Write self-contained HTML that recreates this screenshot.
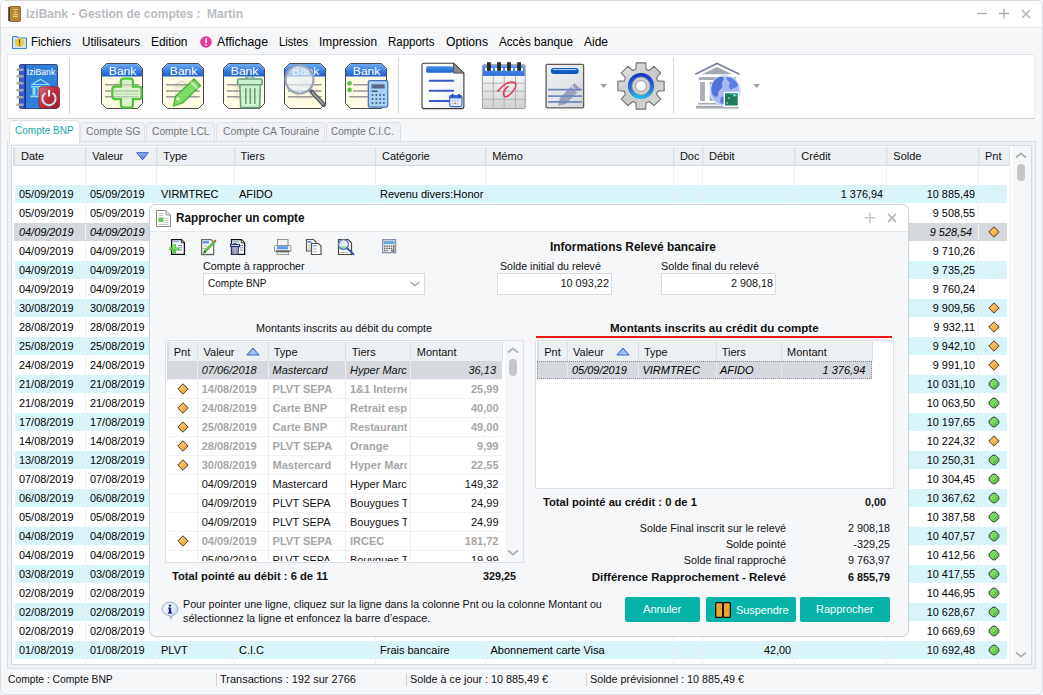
<!DOCTYPE html>
<html><head><meta charset="utf-8"><style>
html,body{margin:0;padding:0;width:1043px;height:695px;overflow:hidden;}
body{position:relative;font-family:"Liberation Sans", sans-serif;}
</style></head><body>
<div style="position:absolute;left:0px;top:0px;width:1043px;height:695px;background:#f5f7f9;"></div>
<div style="position:absolute;left:0px;top:0px;width:1043px;height:695px;border:1px solid #d9dde1;border-radius:6px;box-sizing:border-box;background:#f5f7f9;"></div>
<div style="position:absolute;left:1px;top:1px;width:1041px;height:26px;background:#fff;border-radius:5px 5px 0 0;border-bottom:1px solid #e6e9ec;"></div>
<svg style="position:absolute;left:8px;top:6px" width="13" height="16" viewBox="0 0 13 16">
<rect x="1" y="0.5" width="11.5" height="15" rx="1.5" fill="#b8862f" stroke="#7a5a22" stroke-width="0.8"/>
<rect x="0.3" y="1" width="1.6" height="14" fill="#3b3b3b"/>
<rect x="5" y="3" width="5" height="1" fill="#e8cf8a"/><path d="M5.2 7 L7.5 5 L9.8 7 Z" fill="#e8cf8a"/><rect x="5" y="8" width="5" height="1.2" fill="#e8cf8a"/><rect x="5" y="10" width="5" height="1" fill="#e8cf8a"/>
</svg>
<span id="t1" style="position:absolute;top:4.00px;line-height:20px;font-size:12px;color:#b9bcc0;font-weight:bold;white-space:pre;left:26px;transform-origin:0 50%;transform:scaleX(0.9983);">IziBank - Gestion de comptes :  Martin</span>
<svg style="position:absolute;left:970px;top:5px" width="70" height="20" viewBox="0 0 70 20">
<path d="M7 8.5 H17" stroke="#a9aeb2" stroke-width="1.3"/>
<path d="M29 8.5 H39 M34 3.5 V13.5" stroke="#a9aeb2" stroke-width="1.3"/>
<path d="M52 5 L60 13 M60 5 L52 13" stroke="#a9aeb2" stroke-width="1.3"/>
</svg>
<svg style="position:absolute;left:12px;top:35px" width="15" height="14" viewBox="0 0 15 14">
<path d="M0.5 1.5 H5 L6 3 H14.5 V13.5 H0.5 Z" fill="#cfe3f7" stroke="#3d7fcf" stroke-width="1"/>
<circle cx="7.5" cy="7.5" r="4.6" fill="#f5c842"/>
<rect x="6.9" y="4.3" width="1.3" height="4.2" fill="#5a4500"/><rect x="6.9" y="9.3" width="1.3" height="1.3" fill="#5a4500"/>
</svg>
<svg style="position:absolute;left:200px;top:36px" width="12" height="12" viewBox="0 0 12 12">
<circle cx="6" cy="6" r="5.8" fill="#e8359a"/><rect x="5.2" y="2.3" width="1.6" height="4.8" fill="#fff"/><rect x="5.2" y="8.1" width="1.6" height="1.6" fill="#fff"/>
</svg>
<span id="t2" style="position:absolute;top:32.00px;line-height:20px;font-size:12.5px;color:#000;font-weight:normal;white-space:pre;left:31px;transform-origin:0 50%;transform:scaleX(0.9140);">Fichiers</span>
<span id="t3" style="position:absolute;top:32.00px;line-height:20px;font-size:12.5px;color:#000;font-weight:normal;white-space:pre;left:82px;transform-origin:0 50%;transform:scaleX(0.9381);">Utilisateurs</span>
<span id="t4" style="position:absolute;top:32.00px;line-height:20px;font-size:12.5px;color:#000;font-weight:normal;white-space:pre;left:151px;transform-origin:0 50%;transform:scaleX(0.9546);">Edition</span>
<span id="t5" style="position:absolute;top:32.00px;line-height:20px;font-size:12.5px;color:#000;font-weight:normal;white-space:pre;left:217px;transform-origin:0 50%;transform:scaleX(0.9825);">Affichage</span>
<span id="t6" style="position:absolute;top:32.00px;line-height:20px;font-size:12.5px;color:#000;font-weight:normal;white-space:pre;left:279px;transform-origin:0 50%;transform:scaleX(0.8880);">Listes</span>
<span id="t7" style="position:absolute;top:32.00px;line-height:20px;font-size:12.5px;color:#000;font-weight:normal;white-space:pre;left:319px;transform-origin:0 50%;transform:scaleX(0.9486);">Impression</span>
<span id="t8" style="position:absolute;top:32.00px;line-height:20px;font-size:12.5px;color:#000;font-weight:normal;white-space:pre;left:388px;transform-origin:0 50%;transform:scaleX(0.9165);">Rapports</span>
<span id="t9" style="position:absolute;top:32.00px;line-height:20px;font-size:12.5px;color:#000;font-weight:normal;white-space:pre;left:446px;transform-origin:0 50%;transform:scaleX(0.9746);">Options</span>
<span id="t10" style="position:absolute;top:32.00px;line-height:20px;font-size:12.5px;color:#000;font-weight:normal;white-space:pre;left:499px;transform-origin:0 50%;transform:scaleX(0.9339);">Accès banque</span>
<span id="t11" style="position:absolute;top:32.00px;line-height:20px;font-size:12.5px;color:#000;font-weight:normal;white-space:pre;left:584px;transform-origin:0 50%;transform:scaleX(0.9588);">Aide</span>
<div style="position:absolute;left:7px;top:54px;width:1028px;height:65px;background:#fff;border:1px solid #e1e5e9;border-bottom-color:#cdd2d7;border-right-color:#eceff2;box-sizing:border-box;"></div>
<div style="position:absolute;left:69px;top:58px;width:1px;height:56px;background:#d4d8dc;"></div>
<div style="position:absolute;left:398px;top:58px;width:1px;height:56px;background:#d4d8dc;"></div>
<div style="position:absolute;left:673px;top:58px;width:1px;height:56px;background:#d4d8dc;"></div>
<svg style="position:absolute;left:12px;top:58px" width="50" height="54" viewBox="0 0 50 54">
<defs><linearGradient id="pwr" x1="0" y1="0" x2="1" y2="1"><stop offset="0" stop-color="#d07080"/><stop offset="0.5" stop-color="#c02a3a"/><stop offset="1" stop-color="#a01e2a"/></linearGradient></defs>
<rect x="7.5" y="6.5" width="38" height="44" rx="1.5" fill="#2f80da" stroke="#3a4a7a" stroke-width="1"/>
<rect x="8" y="7" width="6" height="43" fill="#3a5ad0"/><rect x="12.5" y="7" width="1.5" height="43" fill="#1e2a80"/>
<g fill="#a8aaa8"><rect x="4.5" y="10.5" width="7" height="2.5"/><rect x="4.5" y="17" width="7" height="2.5"/><rect x="4.5" y="24" width="7" height="2.5"/><rect x="4.5" y="31" width="7" height="2.5"/><rect x="4.5" y="38" width="7" height="2.5"/><rect x="4.5" y="45.5" width="7" height="2.5"/></g>
<text x="14.8" y="16.7" font-family="Liberation Sans" font-size="9.6" fill="#fff" stroke="#2f80da" stroke-width="0.6" paint-order="stroke" textLength="28.5" lengthAdjust="spacingAndGlyphs">IziBank</text>
<path d="M18.5 27 L28.5 20.5 L38.5 27 Z" fill="#8ee0ee"/><path d="M22 26 L28.5 22 L35 26 Z" fill="#2f80da"/>
<rect x="19" y="28" width="19" height="1.6" fill="#8ee0ee"/>
<g fill="#8ee0ee"><rect x="20.5" y="30" width="3" height="7"/><rect x="25.5" y="30" width="3" height="7"/></g>
<rect x="18.5" y="37.5" width="12" height="1.8" fill="#8ee0ee"/>
<rect x="27" y="28.8" width="20.5" height="21.3" rx="3" fill="url(#pwr)" stroke="#8a2030" stroke-width="0.8"/>
<path d="M33.5 35 A6.6 6.6 0 1 0 40.5 35" fill="none" stroke="#c8e4f4" stroke-width="2"/><rect x="36" y="32" width="2" height="6.5" fill="#e8f4fa"/>
</svg>
<svg style="position:absolute;left:101px;top:63px" width="44" height="47" viewBox="0 0 44 47"><defs><linearGradient id="bh101" x1="0" y1="0" x2="0" y2="1"><stop offset="0" stop-color="#6aaaf2"/><stop offset="0.55" stop-color="#3a7ee0"/><stop offset="1" stop-color="#1e5cc6"/></linearGradient></defs>
<path d="M5.5 0.5 H36.5 L41.5 5.5 V40.5 L36.5 45.5 H5.5 L0.5 40.5 V5.5 Z" fill="#fdfbe2" stroke="#4a4a4a" stroke-width="1"/>
<path d="M5.7 1 H36.3 L41 5.7 V13.6 H1 V5.7 Z" fill="url(#bh101)"/>
<text x="21.6" y="11.8" text-anchor="middle" font-family="Liberation Sans" font-size="11.8" fill="#fff" stroke="#3a7ee0" stroke-width="0.7" paint-order="stroke" textLength="27.5" lengthAdjust="spacingAndGlyphs">Bank</text>
<path d="M12 23 L20 18 L28 23 Z M13 24 H27 M14 25 V33 M26 25 V33 M12 35 H28" fill="none" stroke="#e8dcc0" stroke-width="1.5" opacity="0.8"/><g stroke="#9a9898" stroke-width="1.6"><path d="M4 21.8 H37.7 M4 28 H37.7 M4 33.8 H37.7"/></g><path d="M22.9 15.6 H28.9 Q31.9 15.6 31.9 18.6 V23.7 H37.5 Q40.5 23.7 40.5 26.7 V33.2 Q40.5 36.2 37.5 36.2 H31.9 V41.7 Q31.9 44.7 28.9 44.7 H22.9 Q19.9 44.7 19.9 41.7 V36.2 H14.3 Q11.3 36.2 11.3 33.2 V26.7 Q11.3 23.7 14.3 23.7 H19.9 V18.6 Q19.9 15.6 22.9 15.6 Z" fill="#c8ecc0" fill-opacity="0.6" stroke="#4ec43c" stroke-width="2.2"/><path d="M15 28 H37 M15 31 H37" stroke="#a8dca0" stroke-width="1"/></svg>
<svg style="position:absolute;left:162px;top:63px" width="44" height="47" viewBox="0 0 44 47"><defs><linearGradient id="bh162" x1="0" y1="0" x2="0" y2="1"><stop offset="0" stop-color="#6aaaf2"/><stop offset="0.55" stop-color="#3a7ee0"/><stop offset="1" stop-color="#1e5cc6"/></linearGradient></defs>
<path d="M5.5 0.5 H36.5 L41.5 5.5 V40.5 L36.5 45.5 H5.5 L0.5 40.5 V5.5 Z" fill="#fdfbe2" stroke="#4a4a4a" stroke-width="1"/>
<path d="M5.7 1 H36.3 L41 5.7 V13.6 H1 V5.7 Z" fill="url(#bh162)"/>
<text x="21.6" y="11.8" text-anchor="middle" font-family="Liberation Sans" font-size="11.8" fill="#fff" stroke="#3a7ee0" stroke-width="0.7" paint-order="stroke" textLength="27.5" lengthAdjust="spacingAndGlyphs">Bank</text>
<path d="M12 23 L20 18 L28 23 Z M13 24 H27 M14 25 V33 M26 25 V33 M12 35 H28" fill="none" stroke="#e8dcc0" stroke-width="1.5" opacity="0.8"/><g stroke="#9a9898" stroke-width="1.6"><path d="M4 21.8 H37.7 M4 28 H37.7 M4 33.8 H37.7"/></g><path d="M11.5 43 L13.5 33.5 L32 16 L38.5 22.5 L20.5 40 Z" fill="#80da6a" stroke="#44b030" stroke-width="1.3" stroke-linejoin="round"/><path d="M29 19 L35.5 25.5" stroke="#c8f0b8" stroke-width="1.8"/><path d="M13.5 36 L16.5 34 L18 38 Z" fill="#d8f4c8"/></svg>
<svg style="position:absolute;left:223px;top:63px" width="44" height="47" viewBox="0 0 44 47"><defs><linearGradient id="bh223" x1="0" y1="0" x2="0" y2="1"><stop offset="0" stop-color="#6aaaf2"/><stop offset="0.55" stop-color="#3a7ee0"/><stop offset="1" stop-color="#1e5cc6"/></linearGradient></defs>
<path d="M5.5 0.5 H36.5 L41.5 5.5 V40.5 L36.5 45.5 H5.5 L0.5 40.5 V5.5 Z" fill="#fdfbe2" stroke="#4a4a4a" stroke-width="1"/>
<path d="M5.7 1 H36.3 L41 5.7 V13.6 H1 V5.7 Z" fill="url(#bh223)"/>
<text x="21.6" y="11.8" text-anchor="middle" font-family="Liberation Sans" font-size="11.8" fill="#fff" stroke="#3a7ee0" stroke-width="0.7" paint-order="stroke" textLength="27.5" lengthAdjust="spacingAndGlyphs">Bank</text>
<path d="M12 23 L20 18 L28 23 Z M13 24 H27 M14 25 V33 M26 25 V33 M12 35 H28" fill="none" stroke="#e8dcc0" stroke-width="1.5" opacity="0.8"/><g stroke="#9a9898" stroke-width="1.6"><path d="M4 21.8 H37.7 M4 28 H37.7 M4 33.8 H37.7"/></g><path d="M22 15.5 Q27 11.5 32 15.5" fill="none" stroke="#7aa8c0" stroke-width="1.6"/><rect x="14.6" y="16" width="24.5" height="5.8" rx="1.5" fill="#c8f0cc" stroke="#6e9e76" stroke-width="1.6"/><path d="M16.8 21.8 H37.4 L36.6 43.6 Q36.5 44.6 35.5 44.6 H18.8 Q17.8 44.6 17.7 43.6 Z" fill="#c8f4cc" fill-opacity="0.9" stroke="#6e9e76" stroke-width="1.6"/><path d="M22.8 25 V41 M27.3 25 V41 M31.8 25 V41" stroke="#6e9e76" stroke-width="1.6"/></svg>
<svg style="position:absolute;left:284px;top:63px" width="44" height="47" viewBox="0 0 44 47"><defs><linearGradient id="bh284" x1="0" y1="0" x2="0" y2="1"><stop offset="0" stop-color="#6aaaf2"/><stop offset="0.55" stop-color="#3a7ee0"/><stop offset="1" stop-color="#1e5cc6"/></linearGradient></defs>
<path d="M5.5 0.5 H36.5 L41.5 5.5 V40.5 L36.5 45.5 H5.5 L0.5 40.5 V5.5 Z" fill="#fdfbe2" stroke="#4a4a4a" stroke-width="1"/>
<path d="M5.7 1 H36.3 L41 5.7 V13.6 H1 V5.7 Z" fill="url(#bh284)"/>
<text x="21.6" y="11.8" text-anchor="middle" font-family="Liberation Sans" font-size="11.8" fill="#fff" stroke="#3a7ee0" stroke-width="0.7" paint-order="stroke" textLength="27.5" lengthAdjust="spacingAndGlyphs">Bank</text>
<path d="M12 23 L20 18 L28 23 Z M13 24 H27 M14 25 V33 M26 25 V33 M12 35 H28" fill="none" stroke="#e8dcc0" stroke-width="1.5" opacity="0.8"/><g stroke="#9a9898" stroke-width="1.6"><path d="M4 21.8 H37.7 M4 28 H37.7 M4 33.8 H37.7"/></g><circle cx="15.5" cy="16.5" r="14" fill="#e8f0f8" fill-opacity="0.7" stroke="#9aa4b8" stroke-width="2.2"/><path d="M27.5 28.5 L40 42" stroke="#5c6066" stroke-width="4.2" stroke-linecap="round"/><path d="M28 29 L39.5 41.5" stroke="#a8acb0" stroke-width="1.2"/></svg>
<svg style="position:absolute;left:345px;top:63px" width="44" height="47" viewBox="0 0 44 47"><defs><linearGradient id="bh345" x1="0" y1="0" x2="0" y2="1"><stop offset="0" stop-color="#6aaaf2"/><stop offset="0.55" stop-color="#3a7ee0"/><stop offset="1" stop-color="#1e5cc6"/></linearGradient></defs>
<path d="M5.5 0.5 H36.5 L41.5 5.5 V40.5 L36.5 45.5 H5.5 L0.5 40.5 V5.5 Z" fill="#fdfbe2" stroke="#4a4a4a" stroke-width="1"/>
<path d="M5.7 1 H36.3 L41 5.7 V13.6 H1 V5.7 Z" fill="url(#bh345)"/>
<text x="21.6" y="11.8" text-anchor="middle" font-family="Liberation Sans" font-size="11.8" fill="#fff" stroke="#3a7ee0" stroke-width="0.7" paint-order="stroke" textLength="27.5" lengthAdjust="spacingAndGlyphs">Bank</text>
<circle cx="4.6" cy="20.4" r="2.4" fill="#5cc84a"/><circle cx="4.6" cy="26.9" r="2.4" fill="#5cc84a"/><rect x="23.3" y="17.7" width="19.5" height="26.5" rx="1.5" fill="#a8d4f4" stroke="#4a68b8" stroke-width="1.2"/><rect x="26.5" y="21.3" width="13.2" height="4.2" fill="#5a6888"/><g fill="#4a5a80"><circle cx="27.5" cy="32" r="1"/><circle cx="31.3" cy="32" r="1"/><circle cx="35.1" cy="32" r="1"/><circle cx="38.9" cy="32" r="1"/><circle cx="27.5" cy="36" r="1"/><circle cx="31.3" cy="36" r="1"/><circle cx="35.1" cy="36" r="1"/><circle cx="38.9" cy="36" r="1"/><circle cx="27.5" cy="40" r="1"/><circle cx="31.3" cy="40" r="1"/><circle cx="35.1" cy="40" r="1"/><circle cx="38.9" cy="40" r="1"/></g><rect x="26.5" y="27.5" width="6" height="1.5" fill="#4a5a80"/></svg>
<svg style="position:absolute;left:345px;top:63px" width="44" height="47"><g stroke="#9a9898" stroke-width="1.6"><path d="M8 21.8 H23 M8 28 H23 M4 33.8 H23"/></g></svg>
<svg style="position:absolute;left:416px;top:57px" width="54" height="56" viewBox="0 0 54 56">
<defs><linearGradient id="dpg" x1="0" y1="0" x2="1" y2="1"><stop offset="0.45" stop-color="#fff"/><stop offset="1" stop-color="#dfe2e6"/></linearGradient>
<linearGradient id="dbar" x1="0" y1="0" x2="0" y2="1"><stop offset="0" stop-color="#4a90ea"/><stop offset="1" stop-color="#1e64cc"/></linearGradient></defs>
<path d="M8 6.2 H37.5 L47.9 16.1 V49.6 Q47.9 51.6 45.9 51.6 H8 Q6 51.6 6 49.6 V8.2 Q6 6.2 8 6.2 Z" fill="url(#dpg)" stroke="#3a3a3a" stroke-width="1.1"/>
<path d="M37.5 6.2 V16.1 H47.9 Z" fill="#8a8c90" stroke="#3a3a3a" stroke-width="0.8"/>
<rect x="10.1" y="9.3" width="27" height="6.4" rx="1.5" fill="url(#dbar)"/>
<g stroke="#3c58c8" stroke-width="2"><path d="M12.9 23.8 H37.9 M12.9 33.8 H37.9 M12.9 43.9 H34"/></g>
<rect x="33.6" y="38.6" width="12.3" height="11" rx="1.5" fill="#e0ecfa" stroke="#3a68d0" stroke-width="1.1"/>
<rect x="33.6" y="38.6" width="12.3" height="2.8" fill="#3a68d0"/>
<g fill="#1a3aa0"><rect x="35.8" y="37" width="1.6" height="3"/><rect x="42.2" y="37" width="1.6" height="3"/></g>
<g fill="#9ab4e0"><rect x="36" y="43" width="1.2" height="1.2"/><rect x="38.5" y="43" width="1.2" height="1.2"/><rect x="41" y="43" width="1.2" height="1.2"/><rect x="36" y="46" width="1.2" height="1.2"/><rect x="41" y="46" width="1.2" height="1.2"/></g><rect x="38.5" y="45.5" width="1.6" height="1.6" fill="#e07020"/>
</svg>
<svg style="position:absolute;left:476px;top:57px" width="54" height="56" viewBox="0 0 54 56">
<defs><linearGradient id="cgr" x1="0" y1="0" x2="0" y2="1"><stop offset="0" stop-color="#ffffff"/><stop offset="1" stop-color="#d0d2d4"/></linearGradient>
<linearGradient id="chd" x1="0" y1="0" x2="0" y2="1"><stop offset="0" stop-color="#5a9af0"/><stop offset="1" stop-color="#2a6ed8"/></linearGradient></defs>
<rect x="6.4" y="7.7" width="42.8" height="43.9" rx="1.5" fill="url(#cgr)" stroke="#9a9a9a" stroke-width="1"/>
<rect x="6.9" y="8.2" width="41.8" height="10.7" fill="url(#chd)"/>
<g fill="#fff"><rect x="9" y="11" width="3" height="2.8"/><rect x="19" y="11" width="3" height="2.8"/><rect x="29" y="11" width="3" height="2.8"/><rect x="39" y="11" width="3" height="2.8"/><rect x="14.5" y="11" width="2.5" height="2.8"/><rect x="24.5" y="11" width="2.5" height="2.8"/><rect x="34.5" y="11" width="2.5" height="2.8"/><rect x="44.5" y="11" width="2.5" height="2.8"/></g>
<g fill="#2a2a22"><rect x="11" y="5.2" width="3.8" height="8.5"/><rect x="21.1" y="5.2" width="3.8" height="8.5"/><rect x="31.1" y="5.2" width="3.8" height="8.5"/><rect x="41.2" y="5.2" width="3.8" height="8.5"/></g>
<g stroke="#b4b4b4" stroke-width="1"><path d="M6.5 26.2 H49 M6.5 34.2 H49 M6.5 42.3 H49 M17.3 19 V51.5 M28.2 19 V51.5 M39.5 19 V51.5"/></g>
<path d="M21.5 34.5 C27 27 34 24 38.5 25.5 C42 27.5 38 35 32 39 C27.5 41.5 26.5 37 29 32.5 C30 31 31.5 29.5 32.5 29.5" fill="none" stroke="#e23a5a" stroke-width="1.6"/>
</svg>
<svg style="position:absolute;left:538px;top:57px" width="74" height="56" viewBox="0 0 74 56">
<defs><linearGradient id="npg" x1="0" y1="0" x2="1" y2="1"><stop offset="0" stop-color="#eef1f4"/><stop offset="0.6" stop-color="#e2e4e6"/><stop offset="1" stop-color="#cfd2d6"/></linearGradient></defs>
<rect x="8.1" y="7.3" width="37.5" height="43.5" rx="1" fill="url(#npg)" stroke="#5a5a5a" stroke-width="1.3"/>
<rect x="12.9" y="10.9" width="27.8" height="6" rx="3" fill="#0a5cc0"/><path d="M15 12.6 H38.5" stroke="#cfe4fa" stroke-width="0.9"/>
<path d="M20.2 48.4 L22 41 L36.5 26 L42.5 32 L28 47 Z" fill="#9aa0bc"/><path d="M33.5 29 L39.5 35" stroke="#e8eaf0" stroke-width="1.1"/>
<g stroke="#6f88c0" stroke-width="1.8"><path d="M10.1 32.7 H44 M10.1 39.1 H44 M10.1 44.8 H44"/></g>
<path d="M62.1 27 H69 L65.55 31 Z" fill="#9aa0a4"/>
</svg>
<svg style="position:absolute;left:612px;top:57px" width="56" height="56" viewBox="0 0 56 56">
<defs><linearGradient id="gg" x1="0" y1="0" x2="1" y2="1"><stop offset="0" stop-color="#e4e4e4"/><stop offset="0.5" stop-color="#c8caca"/><stop offset="1" stop-color="#d8d8d8"/></linearGradient>
<linearGradient id="gb" x1="0" y1="0" x2="0" y2="1"><stop offset="0" stop-color="#1030c0"/><stop offset="0.6" stop-color="#2a70d8"/><stop offset="1" stop-color="#20c4e4"/></linearGradient></defs>
<path d="M23.83 12.28 L24.31 5.87 L33.69 5.87 L34.17 12.28 L37.16 13.52 L42.04 9.33 L48.67 15.96 L44.48 20.84 L45.72 23.83 L52.13 24.31 L52.13 33.69 L45.72 34.17 L44.48 37.16 L48.67 42.04 L42.04 48.67 L37.16 44.48 L34.17 45.72 L33.69 52.13 L24.31 52.13 L23.83 45.72 L20.84 44.48 L15.96 48.67 L9.33 42.04 L13.52 37.16 L12.28 34.17 L5.87 33.69 L5.87 24.31 L12.28 23.83 L13.52 20.84 L9.33 15.96 L15.96 9.33 L20.84 13.52 Z" fill="url(#gg)" stroke="#707070" stroke-width="1.1" stroke-linejoin="round"/>
<circle cx="29" cy="29" r="13.1" fill="url(#gb)"/>
<circle cx="29" cy="29" r="9" fill="#cfd0d0" stroke="#9a9c9c" stroke-width="0.8"/>
<circle cx="29" cy="29" r="5.4" fill="#fff" stroke="#8a8a8a" stroke-width="0.8"/>
</svg>
<svg style="position:absolute;left:688px;top:57px" width="80" height="56" viewBox="0 0 80 56">
<path d="M7.3 17.3 L29 6.4 L51.6 17.3" fill="none" stroke="#7a80a0" stroke-width="1.8"/>
<path d="M14 17.3 L29 10 L44 17.3 Z" fill="#a4a8b0"/>
<rect x="10.9" y="20.1" width="37" height="2.9" fill="#a6abb4"/>
<g fill="#a8adb6"><rect x="12.1" y="25" width="4.8" height="19"/><rect x="21.8" y="25" width="4.8" height="19"/></g>
<rect x="10" y="45.9" width="26" height="1.6" fill="#a6abb4"/>
<rect x="8" y="48.8" width="42.8" height="2.8" fill="#a6abb4"/>
<circle cx="37.1" cy="33.8" r="15.7" fill="#d4def6" opacity="0.9"/>
<circle cx="37.1" cy="33.8" r="14.2" fill="#9cb4ee" opacity="0.85"/>
<path d="M24 28 C26 22 31 19 35 20 C37 23 33 25 34 28 C36 31 31 32 30 36 C31 40 27 41 25 38 C23 35 23 31 24 28 Z" fill="#4e74da"/>
<path d="M39 20 C44 20 48 23 50 28 C49 31 46 30 44 32 C41 33 40 29 42 26 C40 24 38 22 39 20 Z" fill="#5a7ede"/>
<path d="M33 40 C36 38 38 42 36 46 C34 48 31 46 33 40 Z" fill="#5a7ede"/>
<rect x="36.3" y="35.5" width="14.1" height="13.7" fill="#1f7a5c" stroke="#fff" stroke-width="1.4"/>
<path d="M37 36.2 H49.7 V39 L43 37.8 Z" fill="#3aaea2"/>
<g fill="#d8f0ea"><circle cx="46.5" cy="38.5" r="0.9"/><circle cx="41" cy="41" r="0.8"/><circle cx="39" cy="46" r="0.8"/></g>
<path d="M65.3 27 H72.1 L68.7 31 Z" fill="#9aa0a4"/>
</svg>
<div style="position:absolute;left:80px;top:122px;width:65px;height:20px;background:#eff1f4;border:1px solid #dde1e6;border-bottom:none;border-radius:4px 4px 0 0;box-sizing:border-box;"></div>
<span id="t12" style="position:absolute;top:120.80px;line-height:20px;font-size:11.5px;color:#74787c;font-weight:normal;white-space:pre;left:86px;transform-origin:0 50%;transform:scaleX(0.9055);">Compte SG</span>
<div style="position:absolute;left:146px;top:122px;width:69px;height:20px;background:#eff1f4;border:1px solid #dde1e6;border-bottom:none;border-radius:4px 4px 0 0;box-sizing:border-box;"></div>
<span id="t13" style="position:absolute;top:120.80px;line-height:20px;font-size:11.5px;color:#74787c;font-weight:normal;white-space:pre;left:152.3px;transform-origin:0 50%;transform:scaleX(0.8906);">Compte LCL</span>
<div style="position:absolute;left:216px;top:122px;width:109px;height:20px;background:#eff1f4;border:1px solid #dde1e6;border-bottom:none;border-radius:4px 4px 0 0;box-sizing:border-box;"></div>
<span id="t14" style="position:absolute;top:120.80px;line-height:20px;font-size:11.5px;color:#74787c;font-weight:normal;white-space:pre;left:222.6px;transform-origin:0 50%;transform:scaleX(0.9084);">Compte CA Touraine</span>
<div style="position:absolute;left:326px;top:122px;width:75px;height:20px;background:#eff1f4;border:1px solid #dde1e6;border-bottom:none;border-radius:4px 4px 0 0;box-sizing:border-box;"></div>
<span id="t15" style="position:absolute;top:120.80px;line-height:20px;font-size:11.5px;color:#74787c;font-weight:normal;white-space:pre;left:331.4px;transform-origin:0 50%;transform:scaleX(0.8606);">Compte C.I.C.</span>
<div style="position:absolute;left:7px;top:141px;width:1029px;height:528px;background:#eff2f5;border:1px solid #dce0e5;box-sizing:border-box;"></div>
<div style="position:absolute;left:9px;top:120px;width:71px;height:24px;background:#fff;border:1px solid #dde1e6;border-bottom:none;border-radius:5px 5px 0 0;box-sizing:border-box;"></div>
<span id="t16" style="position:absolute;top:119.70px;line-height:20px;font-size:11.5px;color:#14aaa8;font-weight:normal;white-space:pre;left:15.3px;transform-origin:0 50%;transform:scaleX(0.8747);">Compte BNP</span>
<div style="position:absolute;left:11px;top:145px;width:1021px;height:520px;background:#fff;border:1px solid #d6dbe0;box-sizing:border-box;"></div>
<div style="position:absolute;left:13px;top:147px;width:997px;height:19px;background:#edf0f3;border-bottom:1px solid #d9dee3;border-right:1px solid #d9dee3;box-sizing:border-box;"></div>
<div style="position:absolute;left:13px;top:147px;width:2px;height:19px;background:#d9dee3;"></div>
<div style="position:absolute;left:85px;top:147px;width:1px;height:18px;background:#d9dee3;"></div>
<div style="position:absolute;left:86px;top:147px;width:1px;height:18px;background:#e6e9ed;"></div>
<div style="position:absolute;left:156px;top:147px;width:1px;height:18px;background:#d9dee3;"></div>
<div style="position:absolute;left:157px;top:147px;width:1px;height:18px;background:#e6e9ed;"></div>
<div style="position:absolute;left:234px;top:147px;width:1px;height:18px;background:#d9dee3;"></div>
<div style="position:absolute;left:235px;top:147px;width:1px;height:18px;background:#e6e9ed;"></div>
<div style="position:absolute;left:375px;top:147px;width:1px;height:18px;background:#d9dee3;"></div>
<div style="position:absolute;left:376px;top:147px;width:1px;height:18px;background:#e6e9ed;"></div>
<div style="position:absolute;left:485px;top:147px;width:1px;height:18px;background:#d9dee3;"></div>
<div style="position:absolute;left:486px;top:147px;width:1px;height:18px;background:#e6e9ed;"></div>
<div style="position:absolute;left:673px;top:147px;width:1px;height:18px;background:#d9dee3;"></div>
<div style="position:absolute;left:674px;top:147px;width:1px;height:18px;background:#e6e9ed;"></div>
<div style="position:absolute;left:702px;top:147px;width:1px;height:18px;background:#d9dee3;"></div>
<div style="position:absolute;left:703px;top:147px;width:1px;height:18px;background:#e6e9ed;"></div>
<div style="position:absolute;left:794px;top:147px;width:1px;height:18px;background:#d9dee3;"></div>
<div style="position:absolute;left:795px;top:147px;width:1px;height:18px;background:#e6e9ed;"></div>
<div style="position:absolute;left:886px;top:147px;width:1px;height:18px;background:#d9dee3;"></div>
<div style="position:absolute;left:887px;top:147px;width:1px;height:18px;background:#e6e9ed;"></div>
<div style="position:absolute;left:978px;top:147px;width:1px;height:18px;background:#d9dee3;"></div>
<div style="position:absolute;left:979px;top:147px;width:1px;height:18px;background:#e6e9ed;"></div>
<span id="t17" style="position:absolute;top:146.30px;line-height:20px;font-size:11px;color:#111;font-weight:normal;white-space:pre;left:21px;transform-origin:0 50%;">Date</span>
<span id="t18" style="position:absolute;top:146.30px;line-height:20px;font-size:11px;color:#111;font-weight:normal;white-space:pre;left:92.3px;transform-origin:0 50%;">Valeur</span>
<span id="t19" style="position:absolute;top:146.30px;line-height:20px;font-size:11px;color:#111;font-weight:normal;white-space:pre;left:163.3px;transform-origin:0 50%;">Type</span>
<span id="t20" style="position:absolute;top:146.30px;line-height:20px;font-size:11px;color:#111;font-weight:normal;white-space:pre;left:240.6px;transform-origin:0 50%;">Tiers</span>
<span id="t21" style="position:absolute;top:146.30px;line-height:20px;font-size:11px;color:#111;font-weight:normal;white-space:pre;left:382px;transform-origin:0 50%;">Catégorie</span>
<span id="t22" style="position:absolute;top:146.30px;line-height:20px;font-size:11px;color:#111;font-weight:normal;white-space:pre;left:492.2px;transform-origin:0 50%;">Mémo</span>
<span id="t23" style="position:absolute;top:146.30px;line-height:20px;font-size:11px;color:#111;font-weight:normal;white-space:pre;left:679.9px;transform-origin:0 50%;">Doc</span>
<span id="t24" style="position:absolute;top:146.30px;line-height:20px;font-size:11px;color:#111;font-weight:normal;white-space:pre;left:709px;transform-origin:0 50%;">Débit</span>
<span id="t25" style="position:absolute;top:146.30px;line-height:20px;font-size:11px;color:#111;font-weight:normal;white-space:pre;left:801.3px;transform-origin:0 50%;">Crédit</span>
<span id="t26" style="position:absolute;top:146.30px;line-height:20px;font-size:11px;color:#111;font-weight:normal;white-space:pre;left:893.3px;transform-origin:0 50%;">Solde</span>
<span id="t27" style="position:absolute;top:146.30px;line-height:20px;font-size:11px;color:#111;font-weight:normal;white-space:pre;left:985px;transform-origin:0 50%;">Pnt</span>
<svg style="position:absolute;left:135.5px;top:151.5px" width="13" height="9"><defs><linearGradient id="tdn" x1="0" y1="0" x2="0" y2="1"><stop offset="0" stop-color="#9ab8f4"/><stop offset="1" stop-color="#4a74d8"/></linearGradient></defs><path d="M0.7 0.7 H12.3 L6.5 7.8 Z" fill="url(#tdn)" stroke="#3a5cc0" stroke-width="1"/></svg>
<div style="position:absolute;left:15px;top:185px;width:992px;height:18px;background:#d8f6f9;"></div>
<span id="t28" style="position:absolute;top:184.00px;line-height:20px;font-size:11px;color:#000;font-weight:normal;white-space:pre;left:19.2px;transform-origin:0 50%;transform:scaleX(0.99);">05/09/2019</span>
<span id="t29" style="position:absolute;top:184.00px;line-height:20px;font-size:11px;color:#000;font-weight:normal;white-space:pre;left:89.9px;transform-origin:0 50%;transform:scaleX(0.99);">05/09/2019</span>
<span id="t30" style="position:absolute;top:184.00px;line-height:20px;font-size:11px;color:#000;font-weight:normal;white-space:pre;left:161px;transform-origin:0 50%;">VIRMTREC</span>
<span id="t31" style="position:absolute;top:184.00px;line-height:20px;font-size:11px;color:#000;font-weight:normal;white-space:pre;left:239px;transform-origin:0 50%;">AFIDO</span>
<span id="t32" style="position:absolute;top:184.00px;line-height:20px;font-size:11px;color:#000;font-weight:normal;white-space:pre;left:380px;transform-origin:0 50%;">Revenu divers:Honor</span>
<span id="t33" style="position:absolute;top:184.00px;line-height:20px;font-size:11px;color:#000;font-weight:normal;white-space:pre;left:482.6px;width:400px;text-align:right;transform-origin:100% 50%;transform:scaleX(0.985);">1 376,94</span>
<span id="t34" style="position:absolute;top:184.00px;line-height:20px;font-size:11px;color:#000;font-weight:normal;white-space:pre;left:574.7px;width:400px;text-align:right;transform-origin:100% 50%;transform:scaleX(0.985);">10 885,49</span>
<span id="t35" style="position:absolute;top:203.00px;line-height:20px;font-size:11px;color:#000;font-weight:normal;white-space:pre;left:19.2px;transform-origin:0 50%;transform:scaleX(0.99);">05/09/2019</span>
<span id="t36" style="position:absolute;top:203.00px;line-height:20px;font-size:11px;color:#000;font-weight:normal;white-space:pre;left:89.9px;transform-origin:0 50%;transform:scaleX(0.99);">05/09/2019</span>
<span id="t37" style="position:absolute;top:203.00px;line-height:20px;font-size:11px;color:#000;font-weight:normal;white-space:pre;left:574.7px;width:400px;text-align:right;transform-origin:100% 50%;transform:scaleX(0.985);">9 508,55</span>
<div style="position:absolute;left:13.5px;top:223px;width:993.5px;height:18px;background:#d5d9dd;"></div>
<span id="t38" style="position:absolute;top:222.00px;line-height:20px;font-size:11px;color:#000;font-weight:normal;white-space:pre;font-style:italic;left:19.2px;transform-origin:0 50%;transform:scaleX(0.99);">04/09/2019</span>
<span id="t39" style="position:absolute;top:222.00px;line-height:20px;font-size:11px;color:#000;font-weight:normal;white-space:pre;font-style:italic;left:89.9px;transform-origin:0 50%;transform:scaleX(0.99);">04/09/2019</span>
<span id="t40" style="position:absolute;top:222.00px;line-height:20px;font-size:11px;color:#000;font-weight:normal;white-space:pre;font-style:italic;left:572.2px;width:400px;text-align:right;transform-origin:100% 50%;transform:scaleX(0.985);">9 528,54</span>
<svg style="position:absolute;left:988px;top:226px" width="12" height="12" viewBox="0 0 12 12"><path d="M6 0.8 L11.2 6 L6 11.2 L0.8 6 Z" fill="#f8a838" stroke="#4a3e2a" stroke-width="1"/><path d="M6 1.8 L8.6 4.4 L4.4 8.6 L1.8 6 Z" fill="#f8c878" opacity="0.7"/></svg>
<span id="t41" style="position:absolute;top:241.00px;line-height:20px;font-size:11px;color:#000;font-weight:normal;white-space:pre;left:19.2px;transform-origin:0 50%;transform:scaleX(0.99);">04/09/2019</span>
<span id="t42" style="position:absolute;top:241.00px;line-height:20px;font-size:11px;color:#000;font-weight:normal;white-space:pre;left:89.9px;transform-origin:0 50%;transform:scaleX(0.99);">04/09/2019</span>
<span id="t43" style="position:absolute;top:241.00px;line-height:20px;font-size:11px;color:#000;font-weight:normal;white-space:pre;left:574.7px;width:400px;text-align:right;transform-origin:100% 50%;transform:scaleX(0.985);">9 710,26</span>
<div style="position:absolute;left:15px;top:261px;width:992px;height:18px;background:#d8f6f9;"></div>
<span id="t44" style="position:absolute;top:260.00px;line-height:20px;font-size:11px;color:#000;font-weight:normal;white-space:pre;left:19.2px;transform-origin:0 50%;transform:scaleX(0.99);">04/09/2019</span>
<span id="t45" style="position:absolute;top:260.00px;line-height:20px;font-size:11px;color:#000;font-weight:normal;white-space:pre;left:89.9px;transform-origin:0 50%;transform:scaleX(0.99);">04/09/2019</span>
<span id="t46" style="position:absolute;top:260.00px;line-height:20px;font-size:11px;color:#000;font-weight:normal;white-space:pre;left:574.7px;width:400px;text-align:right;transform-origin:100% 50%;transform:scaleX(0.985);">9 735,25</span>
<span id="t47" style="position:absolute;top:279.00px;line-height:20px;font-size:11px;color:#000;font-weight:normal;white-space:pre;left:19.2px;transform-origin:0 50%;transform:scaleX(0.99);">04/09/2019</span>
<span id="t48" style="position:absolute;top:279.00px;line-height:20px;font-size:11px;color:#000;font-weight:normal;white-space:pre;left:89.9px;transform-origin:0 50%;transform:scaleX(0.99);">04/09/2019</span>
<span id="t49" style="position:absolute;top:279.00px;line-height:20px;font-size:11px;color:#000;font-weight:normal;white-space:pre;left:574.7px;width:400px;text-align:right;transform-origin:100% 50%;transform:scaleX(0.985);">9 760,24</span>
<div style="position:absolute;left:15px;top:299px;width:992px;height:18px;background:#d8f6f9;"></div>
<span id="t50" style="position:absolute;top:298.00px;line-height:20px;font-size:11px;color:#000;font-weight:normal;white-space:pre;left:19.2px;transform-origin:0 50%;transform:scaleX(0.99);">30/08/2019</span>
<span id="t51" style="position:absolute;top:298.00px;line-height:20px;font-size:11px;color:#000;font-weight:normal;white-space:pre;left:89.9px;transform-origin:0 50%;transform:scaleX(0.99);">30/08/2019</span>
<span id="t52" style="position:absolute;top:298.00px;line-height:20px;font-size:11px;color:#000;font-weight:normal;white-space:pre;left:574.7px;width:400px;text-align:right;transform-origin:100% 50%;transform:scaleX(0.985);">9 909,56</span>
<svg style="position:absolute;left:988px;top:302px" width="12" height="12" viewBox="0 0 12 12"><path d="M6 0.8 L11.2 6 L6 11.2 L0.8 6 Z" fill="#f8a838" stroke="#4a3e2a" stroke-width="1"/><path d="M6 1.8 L8.6 4.4 L4.4 8.6 L1.8 6 Z" fill="#f8c878" opacity="0.7"/></svg>
<span id="t53" style="position:absolute;top:317.00px;line-height:20px;font-size:11px;color:#000;font-weight:normal;white-space:pre;left:19.2px;transform-origin:0 50%;transform:scaleX(0.99);">28/08/2019</span>
<span id="t54" style="position:absolute;top:317.00px;line-height:20px;font-size:11px;color:#000;font-weight:normal;white-space:pre;left:89.9px;transform-origin:0 50%;transform:scaleX(0.99);">28/08/2019</span>
<span id="t55" style="position:absolute;top:317.00px;line-height:20px;font-size:11px;color:#000;font-weight:normal;white-space:pre;left:574.7px;width:400px;text-align:right;transform-origin:100% 50%;transform:scaleX(0.985);">9 932,11</span>
<svg style="position:absolute;left:988px;top:321px" width="12" height="12" viewBox="0 0 12 12"><path d="M6 0.8 L11.2 6 L6 11.2 L0.8 6 Z" fill="#f8a838" stroke="#4a3e2a" stroke-width="1"/><path d="M6 1.8 L8.6 4.4 L4.4 8.6 L1.8 6 Z" fill="#f8c878" opacity="0.7"/></svg>
<div style="position:absolute;left:15px;top:337px;width:992px;height:18px;background:#d8f6f9;"></div>
<span id="t56" style="position:absolute;top:336.00px;line-height:20px;font-size:11px;color:#000;font-weight:normal;white-space:pre;left:19.2px;transform-origin:0 50%;transform:scaleX(0.99);">25/08/2019</span>
<span id="t57" style="position:absolute;top:336.00px;line-height:20px;font-size:11px;color:#000;font-weight:normal;white-space:pre;left:89.9px;transform-origin:0 50%;transform:scaleX(0.99);">25/08/2019</span>
<span id="t58" style="position:absolute;top:336.00px;line-height:20px;font-size:11px;color:#000;font-weight:normal;white-space:pre;left:574.7px;width:400px;text-align:right;transform-origin:100% 50%;transform:scaleX(0.985);">9 942,10</span>
<svg style="position:absolute;left:988px;top:340px" width="12" height="12" viewBox="0 0 12 12"><path d="M6 0.8 L11.2 6 L6 11.2 L0.8 6 Z" fill="#f8a838" stroke="#4a3e2a" stroke-width="1"/><path d="M6 1.8 L8.6 4.4 L4.4 8.6 L1.8 6 Z" fill="#f8c878" opacity="0.7"/></svg>
<span id="t59" style="position:absolute;top:355.00px;line-height:20px;font-size:11px;color:#000;font-weight:normal;white-space:pre;left:19.2px;transform-origin:0 50%;transform:scaleX(0.99);">24/08/2019</span>
<span id="t60" style="position:absolute;top:355.00px;line-height:20px;font-size:11px;color:#000;font-weight:normal;white-space:pre;left:89.9px;transform-origin:0 50%;transform:scaleX(0.99);">24/08/2019</span>
<span id="t61" style="position:absolute;top:355.00px;line-height:20px;font-size:11px;color:#000;font-weight:normal;white-space:pre;left:574.7px;width:400px;text-align:right;transform-origin:100% 50%;transform:scaleX(0.985);">9 991,10</span>
<svg style="position:absolute;left:988px;top:359px" width="12" height="12" viewBox="0 0 12 12"><path d="M6 0.8 L11.2 6 L6 11.2 L0.8 6 Z" fill="#f8a838" stroke="#4a3e2a" stroke-width="1"/><path d="M6 1.8 L8.6 4.4 L4.4 8.6 L1.8 6 Z" fill="#f8c878" opacity="0.7"/></svg>
<div style="position:absolute;left:15px;top:375px;width:992px;height:18px;background:#d8f6f9;"></div>
<span id="t62" style="position:absolute;top:374.00px;line-height:20px;font-size:11px;color:#000;font-weight:normal;white-space:pre;left:19.2px;transform-origin:0 50%;transform:scaleX(0.99);">21/08/2019</span>
<span id="t63" style="position:absolute;top:374.00px;line-height:20px;font-size:11px;color:#000;font-weight:normal;white-space:pre;left:89.9px;transform-origin:0 50%;transform:scaleX(0.99);">21/08/2019</span>
<span id="t64" style="position:absolute;top:374.00px;line-height:20px;font-size:11px;color:#000;font-weight:normal;white-space:pre;left:574.7px;width:400px;text-align:right;transform-origin:100% 50%;transform:scaleX(0.985);">10 031,10</span>
<svg style="position:absolute;left:988px;top:378px" width="12" height="12" viewBox="0 0 12 12"><path d="M4.6 1.2 H7.4 L10.8 4.6 V7.4 L7.4 10.8 H4.6 L1.2 7.4 V4.6 Z" fill="#7ad862" stroke="#333" stroke-width="1"/><path d="M9.6 3.6 L3.6 9.6 L4.8 10.3 H7.2 L10.3 7.2 V4.8 Z" fill="#5cc048" opacity="0.8"/></svg>
<span id="t65" style="position:absolute;top:393.00px;line-height:20px;font-size:11px;color:#000;font-weight:normal;white-space:pre;left:19.2px;transform-origin:0 50%;transform:scaleX(0.99);">21/08/2019</span>
<span id="t66" style="position:absolute;top:393.00px;line-height:20px;font-size:11px;color:#000;font-weight:normal;white-space:pre;left:89.9px;transform-origin:0 50%;transform:scaleX(0.99);">21/08/2019</span>
<span id="t67" style="position:absolute;top:393.00px;line-height:20px;font-size:11px;color:#000;font-weight:normal;white-space:pre;left:574.7px;width:400px;text-align:right;transform-origin:100% 50%;transform:scaleX(0.985);">10 063,50</span>
<svg style="position:absolute;left:988px;top:397px" width="12" height="12" viewBox="0 0 12 12"><path d="M4.6 1.2 H7.4 L10.8 4.6 V7.4 L7.4 10.8 H4.6 L1.2 7.4 V4.6 Z" fill="#7ad862" stroke="#333" stroke-width="1"/><path d="M9.6 3.6 L3.6 9.6 L4.8 10.3 H7.2 L10.3 7.2 V4.8 Z" fill="#5cc048" opacity="0.8"/></svg>
<div style="position:absolute;left:15px;top:413px;width:992px;height:18px;background:#d8f6f9;"></div>
<span id="t68" style="position:absolute;top:412.00px;line-height:20px;font-size:11px;color:#000;font-weight:normal;white-space:pre;left:19.2px;transform-origin:0 50%;transform:scaleX(0.99);">17/08/2019</span>
<span id="t69" style="position:absolute;top:412.00px;line-height:20px;font-size:11px;color:#000;font-weight:normal;white-space:pre;left:89.9px;transform-origin:0 50%;transform:scaleX(0.99);">17/08/2019</span>
<span id="t70" style="position:absolute;top:412.00px;line-height:20px;font-size:11px;color:#000;font-weight:normal;white-space:pre;left:574.7px;width:400px;text-align:right;transform-origin:100% 50%;transform:scaleX(0.985);">10 197,65</span>
<svg style="position:absolute;left:988px;top:416px" width="12" height="12" viewBox="0 0 12 12"><path d="M4.6 1.2 H7.4 L10.8 4.6 V7.4 L7.4 10.8 H4.6 L1.2 7.4 V4.6 Z" fill="#7ad862" stroke="#333" stroke-width="1"/><path d="M9.6 3.6 L3.6 9.6 L4.8 10.3 H7.2 L10.3 7.2 V4.8 Z" fill="#5cc048" opacity="0.8"/></svg>
<span id="t71" style="position:absolute;top:431.00px;line-height:20px;font-size:11px;color:#000;font-weight:normal;white-space:pre;left:19.2px;transform-origin:0 50%;transform:scaleX(0.99);">14/08/2019</span>
<span id="t72" style="position:absolute;top:431.00px;line-height:20px;font-size:11px;color:#000;font-weight:normal;white-space:pre;left:89.9px;transform-origin:0 50%;transform:scaleX(0.99);">14/08/2019</span>
<span id="t73" style="position:absolute;top:431.00px;line-height:20px;font-size:11px;color:#000;font-weight:normal;white-space:pre;left:574.7px;width:400px;text-align:right;transform-origin:100% 50%;transform:scaleX(0.985);">10 224,32</span>
<svg style="position:absolute;left:988px;top:435px" width="12" height="12" viewBox="0 0 12 12"><path d="M6 0.8 L11.2 6 L6 11.2 L0.8 6 Z" fill="#f8a838" stroke="#4a3e2a" stroke-width="1"/><path d="M6 1.8 L8.6 4.4 L4.4 8.6 L1.8 6 Z" fill="#f8c878" opacity="0.7"/></svg>
<div style="position:absolute;left:15px;top:451px;width:992px;height:18px;background:#d8f6f9;"></div>
<span id="t74" style="position:absolute;top:450.00px;line-height:20px;font-size:11px;color:#000;font-weight:normal;white-space:pre;left:19.2px;transform-origin:0 50%;transform:scaleX(0.99);">13/08/2019</span>
<span id="t75" style="position:absolute;top:450.00px;line-height:20px;font-size:11px;color:#000;font-weight:normal;white-space:pre;left:89.9px;transform-origin:0 50%;transform:scaleX(0.99);">12/08/2019</span>
<span id="t76" style="position:absolute;top:450.00px;line-height:20px;font-size:11px;color:#000;font-weight:normal;white-space:pre;left:574.7px;width:400px;text-align:right;transform-origin:100% 50%;transform:scaleX(0.985);">10 250,31</span>
<svg style="position:absolute;left:988px;top:454px" width="12" height="12" viewBox="0 0 12 12"><path d="M4.6 1.2 H7.4 L10.8 4.6 V7.4 L7.4 10.8 H4.6 L1.2 7.4 V4.6 Z" fill="#7ad862" stroke="#333" stroke-width="1"/><path d="M9.6 3.6 L3.6 9.6 L4.8 10.3 H7.2 L10.3 7.2 V4.8 Z" fill="#5cc048" opacity="0.8"/></svg>
<span id="t77" style="position:absolute;top:469.00px;line-height:20px;font-size:11px;color:#000;font-weight:normal;white-space:pre;left:19.2px;transform-origin:0 50%;transform:scaleX(0.99);">07/08/2019</span>
<span id="t78" style="position:absolute;top:469.00px;line-height:20px;font-size:11px;color:#000;font-weight:normal;white-space:pre;left:89.9px;transform-origin:0 50%;transform:scaleX(0.99);">07/08/2019</span>
<span id="t79" style="position:absolute;top:469.00px;line-height:20px;font-size:11px;color:#000;font-weight:normal;white-space:pre;left:574.7px;width:400px;text-align:right;transform-origin:100% 50%;transform:scaleX(0.985);">10 304,45</span>
<svg style="position:absolute;left:988px;top:473px" width="12" height="12" viewBox="0 0 12 12"><path d="M4.6 1.2 H7.4 L10.8 4.6 V7.4 L7.4 10.8 H4.6 L1.2 7.4 V4.6 Z" fill="#7ad862" stroke="#333" stroke-width="1"/><path d="M9.6 3.6 L3.6 9.6 L4.8 10.3 H7.2 L10.3 7.2 V4.8 Z" fill="#5cc048" opacity="0.8"/></svg>
<div style="position:absolute;left:15px;top:489px;width:992px;height:18px;background:#d8f6f9;"></div>
<span id="t80" style="position:absolute;top:488.00px;line-height:20px;font-size:11px;color:#000;font-weight:normal;white-space:pre;left:19.2px;transform-origin:0 50%;transform:scaleX(0.99);">06/08/2019</span>
<span id="t81" style="position:absolute;top:488.00px;line-height:20px;font-size:11px;color:#000;font-weight:normal;white-space:pre;left:89.9px;transform-origin:0 50%;transform:scaleX(0.99);">06/08/2019</span>
<span id="t82" style="position:absolute;top:488.00px;line-height:20px;font-size:11px;color:#000;font-weight:normal;white-space:pre;left:574.7px;width:400px;text-align:right;transform-origin:100% 50%;transform:scaleX(0.985);">10 367,62</span>
<svg style="position:absolute;left:988px;top:492px" width="12" height="12" viewBox="0 0 12 12"><path d="M4.6 1.2 H7.4 L10.8 4.6 V7.4 L7.4 10.8 H4.6 L1.2 7.4 V4.6 Z" fill="#7ad862" stroke="#333" stroke-width="1"/><path d="M9.6 3.6 L3.6 9.6 L4.8 10.3 H7.2 L10.3 7.2 V4.8 Z" fill="#5cc048" opacity="0.8"/></svg>
<span id="t83" style="position:absolute;top:507.00px;line-height:20px;font-size:11px;color:#000;font-weight:normal;white-space:pre;left:19.2px;transform-origin:0 50%;transform:scaleX(0.99);">05/08/2019</span>
<span id="t84" style="position:absolute;top:507.00px;line-height:20px;font-size:11px;color:#000;font-weight:normal;white-space:pre;left:89.9px;transform-origin:0 50%;transform:scaleX(0.99);">05/08/2019</span>
<span id="t85" style="position:absolute;top:507.00px;line-height:20px;font-size:11px;color:#000;font-weight:normal;white-space:pre;left:574.7px;width:400px;text-align:right;transform-origin:100% 50%;transform:scaleX(0.985);">10 387,58</span>
<svg style="position:absolute;left:988px;top:511px" width="12" height="12" viewBox="0 0 12 12"><path d="M4.6 1.2 H7.4 L10.8 4.6 V7.4 L7.4 10.8 H4.6 L1.2 7.4 V4.6 Z" fill="#7ad862" stroke="#333" stroke-width="1"/><path d="M9.6 3.6 L3.6 9.6 L4.8 10.3 H7.2 L10.3 7.2 V4.8 Z" fill="#5cc048" opacity="0.8"/></svg>
<div style="position:absolute;left:15px;top:527px;width:992px;height:18px;background:#d8f6f9;"></div>
<span id="t86" style="position:absolute;top:526.00px;line-height:20px;font-size:11px;color:#000;font-weight:normal;white-space:pre;left:19.2px;transform-origin:0 50%;transform:scaleX(0.99);">04/08/2019</span>
<span id="t87" style="position:absolute;top:526.00px;line-height:20px;font-size:11px;color:#000;font-weight:normal;white-space:pre;left:89.9px;transform-origin:0 50%;transform:scaleX(0.99);">04/08/2019</span>
<span id="t88" style="position:absolute;top:526.00px;line-height:20px;font-size:11px;color:#000;font-weight:normal;white-space:pre;left:574.7px;width:400px;text-align:right;transform-origin:100% 50%;transform:scaleX(0.985);">10 407,57</span>
<svg style="position:absolute;left:988px;top:530px" width="12" height="12" viewBox="0 0 12 12"><path d="M4.6 1.2 H7.4 L10.8 4.6 V7.4 L7.4 10.8 H4.6 L1.2 7.4 V4.6 Z" fill="#7ad862" stroke="#333" stroke-width="1"/><path d="M9.6 3.6 L3.6 9.6 L4.8 10.3 H7.2 L10.3 7.2 V4.8 Z" fill="#5cc048" opacity="0.8"/></svg>
<span id="t89" style="position:absolute;top:545.00px;line-height:20px;font-size:11px;color:#000;font-weight:normal;white-space:pre;left:19.2px;transform-origin:0 50%;transform:scaleX(0.99);">04/08/2019</span>
<span id="t90" style="position:absolute;top:545.00px;line-height:20px;font-size:11px;color:#000;font-weight:normal;white-space:pre;left:89.9px;transform-origin:0 50%;transform:scaleX(0.99);">04/08/2019</span>
<span id="t91" style="position:absolute;top:545.00px;line-height:20px;font-size:11px;color:#000;font-weight:normal;white-space:pre;left:574.7px;width:400px;text-align:right;transform-origin:100% 50%;transform:scaleX(0.985);">10 412,56</span>
<svg style="position:absolute;left:988px;top:549px" width="12" height="12" viewBox="0 0 12 12"><path d="M4.6 1.2 H7.4 L10.8 4.6 V7.4 L7.4 10.8 H4.6 L1.2 7.4 V4.6 Z" fill="#7ad862" stroke="#333" stroke-width="1"/><path d="M9.6 3.6 L3.6 9.6 L4.8 10.3 H7.2 L10.3 7.2 V4.8 Z" fill="#5cc048" opacity="0.8"/></svg>
<div style="position:absolute;left:15px;top:565px;width:992px;height:18px;background:#d8f6f9;"></div>
<span id="t92" style="position:absolute;top:564.00px;line-height:20px;font-size:11px;color:#000;font-weight:normal;white-space:pre;left:19.2px;transform-origin:0 50%;transform:scaleX(0.99);">03/08/2019</span>
<span id="t93" style="position:absolute;top:564.00px;line-height:20px;font-size:11px;color:#000;font-weight:normal;white-space:pre;left:89.9px;transform-origin:0 50%;transform:scaleX(0.99);">03/08/2019</span>
<span id="t94" style="position:absolute;top:564.00px;line-height:20px;font-size:11px;color:#000;font-weight:normal;white-space:pre;left:574.7px;width:400px;text-align:right;transform-origin:100% 50%;transform:scaleX(0.985);">10 417,55</span>
<svg style="position:absolute;left:988px;top:568px" width="12" height="12" viewBox="0 0 12 12"><path d="M4.6 1.2 H7.4 L10.8 4.6 V7.4 L7.4 10.8 H4.6 L1.2 7.4 V4.6 Z" fill="#7ad862" stroke="#333" stroke-width="1"/><path d="M9.6 3.6 L3.6 9.6 L4.8 10.3 H7.2 L10.3 7.2 V4.8 Z" fill="#5cc048" opacity="0.8"/></svg>
<span id="t95" style="position:absolute;top:583.00px;line-height:20px;font-size:11px;color:#000;font-weight:normal;white-space:pre;left:19.2px;transform-origin:0 50%;transform:scaleX(0.99);">02/08/2019</span>
<span id="t96" style="position:absolute;top:583.00px;line-height:20px;font-size:11px;color:#000;font-weight:normal;white-space:pre;left:89.9px;transform-origin:0 50%;transform:scaleX(0.99);">02/08/2019</span>
<span id="t97" style="position:absolute;top:583.00px;line-height:20px;font-size:11px;color:#000;font-weight:normal;white-space:pre;left:574.7px;width:400px;text-align:right;transform-origin:100% 50%;transform:scaleX(0.985);">10 446,95</span>
<svg style="position:absolute;left:988px;top:587px" width="12" height="12" viewBox="0 0 12 12"><path d="M4.6 1.2 H7.4 L10.8 4.6 V7.4 L7.4 10.8 H4.6 L1.2 7.4 V4.6 Z" fill="#7ad862" stroke="#333" stroke-width="1"/><path d="M9.6 3.6 L3.6 9.6 L4.8 10.3 H7.2 L10.3 7.2 V4.8 Z" fill="#5cc048" opacity="0.8"/></svg>
<div style="position:absolute;left:15px;top:603px;width:992px;height:18px;background:#d8f6f9;"></div>
<span id="t98" style="position:absolute;top:602.00px;line-height:20px;font-size:11px;color:#000;font-weight:normal;white-space:pre;left:19.2px;transform-origin:0 50%;transform:scaleX(0.99);">02/08/2019</span>
<span id="t99" style="position:absolute;top:602.00px;line-height:20px;font-size:11px;color:#000;font-weight:normal;white-space:pre;left:89.9px;transform-origin:0 50%;transform:scaleX(0.99);">02/08/2019</span>
<span id="t100" style="position:absolute;top:602.00px;line-height:20px;font-size:11px;color:#000;font-weight:normal;white-space:pre;left:574.7px;width:400px;text-align:right;transform-origin:100% 50%;transform:scaleX(0.985);">10 628,67</span>
<svg style="position:absolute;left:988px;top:606px" width="12" height="12" viewBox="0 0 12 12"><path d="M4.6 1.2 H7.4 L10.8 4.6 V7.4 L7.4 10.8 H4.6 L1.2 7.4 V4.6 Z" fill="#7ad862" stroke="#333" stroke-width="1"/><path d="M9.6 3.6 L3.6 9.6 L4.8 10.3 H7.2 L10.3 7.2 V4.8 Z" fill="#5cc048" opacity="0.8"/></svg>
<span id="t101" style="position:absolute;top:621.00px;line-height:20px;font-size:11px;color:#000;font-weight:normal;white-space:pre;left:19.2px;transform-origin:0 50%;transform:scaleX(0.99);">02/08/2019</span>
<span id="t102" style="position:absolute;top:621.00px;line-height:20px;font-size:11px;color:#000;font-weight:normal;white-space:pre;left:89.9px;transform-origin:0 50%;transform:scaleX(0.99);">02/08/2019</span>
<span id="t103" style="position:absolute;top:621.00px;line-height:20px;font-size:11px;color:#000;font-weight:normal;white-space:pre;left:574.7px;width:400px;text-align:right;transform-origin:100% 50%;transform:scaleX(0.985);">10 669,69</span>
<svg style="position:absolute;left:988px;top:625px" width="12" height="12" viewBox="0 0 12 12"><path d="M4.6 1.2 H7.4 L10.8 4.6 V7.4 L7.4 10.8 H4.6 L1.2 7.4 V4.6 Z" fill="#7ad862" stroke="#333" stroke-width="1"/><path d="M9.6 3.6 L3.6 9.6 L4.8 10.3 H7.2 L10.3 7.2 V4.8 Z" fill="#5cc048" opacity="0.8"/></svg>
<div style="position:absolute;left:15px;top:641px;width:992px;height:18px;background:#d8f6f9;"></div>
<span id="t104" style="position:absolute;top:640.00px;line-height:20px;font-size:11px;color:#000;font-weight:normal;white-space:pre;left:19.2px;transform-origin:0 50%;transform:scaleX(0.99);">01/08/2019</span>
<span id="t105" style="position:absolute;top:640.00px;line-height:20px;font-size:11px;color:#000;font-weight:normal;white-space:pre;left:89.9px;transform-origin:0 50%;transform:scaleX(0.99);">01/08/2019</span>
<span id="t106" style="position:absolute;top:640.00px;line-height:20px;font-size:11px;color:#000;font-weight:normal;white-space:pre;left:161px;transform-origin:0 50%;">PLVT</span>
<span id="t107" style="position:absolute;top:640.00px;line-height:20px;font-size:11px;color:#000;font-weight:normal;white-space:pre;left:239px;transform-origin:0 50%;">C.I.C</span>
<span id="t108" style="position:absolute;top:640.00px;line-height:20px;font-size:11px;color:#000;font-weight:normal;white-space:pre;left:380px;transform-origin:0 50%;">Frais bancaire</span>
<span id="t109" style="position:absolute;top:640.00px;line-height:20px;font-size:11px;color:#000;font-weight:normal;white-space:pre;left:490.5px;transform-origin:0 50%;">Abonnement carte Visa</span>
<span id="t110" style="position:absolute;top:640.00px;line-height:20px;font-size:11px;color:#000;font-weight:normal;white-space:pre;left:390.79999999999995px;width:400px;text-align:right;transform-origin:100% 50%;transform:scaleX(0.985);">42,00</span>
<span id="t111" style="position:absolute;top:640.00px;line-height:20px;font-size:11px;color:#000;font-weight:normal;white-space:pre;left:574.7px;width:400px;text-align:right;transform-origin:100% 50%;transform:scaleX(0.985);">10 692,48</span>
<svg style="position:absolute;left:988px;top:644px" width="12" height="12" viewBox="0 0 12 12"><path d="M4.6 1.2 H7.4 L10.8 4.6 V7.4 L7.4 10.8 H4.6 L1.2 7.4 V4.6 Z" fill="#7ad862" stroke="#333" stroke-width="1"/><path d="M9.6 3.6 L3.6 9.6 L4.8 10.3 H7.2 L10.3 7.2 V4.8 Z" fill="#5cc048" opacity="0.8"/></svg>
<div style="position:absolute;left:85px;top:166px;width:1px;height:498px;background:#eef0f2;"></div>
<div style="position:absolute;left:156px;top:166px;width:1px;height:498px;background:#eef0f2;"></div>
<div style="position:absolute;left:234px;top:166px;width:1px;height:498px;background:#eef0f2;"></div>
<div style="position:absolute;left:375px;top:166px;width:1px;height:498px;background:#eef0f2;"></div>
<div style="position:absolute;left:485px;top:166px;width:1px;height:498px;background:#eef0f2;"></div>
<div style="position:absolute;left:673px;top:166px;width:1px;height:498px;background:#eef0f2;"></div>
<div style="position:absolute;left:702px;top:166px;width:1px;height:498px;background:#eef0f2;"></div>
<div style="position:absolute;left:794px;top:166px;width:1px;height:498px;background:#eef0f2;"></div>
<div style="position:absolute;left:886px;top:166px;width:1px;height:498px;background:#eef0f2;"></div>
<div style="position:absolute;left:978px;top:166px;width:1px;height:498px;background:#eef0f2;"></div>
<div style="position:absolute;left:1010px;top:166px;width:1px;height:498px;background:#eef0f2;"></div>
<div style="position:absolute;left:1013px;top:146px;width:18px;height:518px;background:#f4f6f8;"></div>
<svg style="position:absolute;left:1014px;top:150px" width="14" height="10"><path d="M2 7.5 L7 3.5 L12 7.5" fill="none" stroke="#b0b6b8" stroke-width="1.8"/></svg>
<div style="position:absolute;left:1017px;top:164px;width:8px;height:17px;background:#c4c6c8;border-radius:4px;"></div>
<svg style="position:absolute;left:1014px;top:650px" width="14" height="10"><path d="M2 2.5 L7 6.5 L12 2.5" fill="none" stroke="#b0b6b8" stroke-width="1.8"/></svg>
<span id="t112" style="position:absolute;top:668.50px;line-height:20px;font-size:11.5px;color:#111;font-weight:normal;white-space:pre;left:8px;transform-origin:0 50%;transform:scaleX(0.8951);">Compte : Compte BNP</span>
<div style="position:absolute;left:216px;top:673px;width:1px;height:13px;background:#cbd2d9;"></div>
<span id="t113" style="position:absolute;top:668.50px;line-height:20px;font-size:11.5px;color:#111;font-weight:normal;white-space:pre;left:220px;transform-origin:0 50%;transform:scaleX(0.9568);">Transactions : 192 sur 2766</span>
<div style="position:absolute;left:406px;top:673px;width:1px;height:13px;background:#cbd2d9;"></div>
<span id="t114" style="position:absolute;top:668.50px;line-height:20px;font-size:11.5px;color:#111;font-weight:normal;white-space:pre;left:410px;transform-origin:0 50%;transform:scaleX(0.9384);">Solde à ce jour : 10 885,49 €</span>
<div style="position:absolute;left:586px;top:673px;width:1px;height:13px;background:#cbd2d9;"></div>
<span id="t115" style="position:absolute;top:668.50px;line-height:20px;font-size:11.5px;color:#111;font-weight:normal;white-space:pre;left:590px;transform-origin:0 50%;transform:scaleX(0.9371);">Solde prévisionnel : 10 885,49 €</span>
<div style="position:absolute;left:149px;top:204px;width:760px;height:433px;background:#f5f7f9;border:1px solid #cdd2d7;border-radius:7px;box-sizing:border-box;box-shadow:0 0 2px rgba(0,0,0,0.06);"></div>
<div style="position:absolute;left:150px;top:205px;width:758px;height:26px;background:#fff;border-radius:6px 6px 0 0;border-bottom:1px solid #e3e6ea;"></div>
<svg style="position:absolute;left:156px;top:210px" width="15" height="17" viewBox="0 0 15 17">
<path d="M0.5 0.5 H10 L14.5 5 V16.5 H0.5 Z" fill="#fafafa" stroke="#8a8a80" stroke-width="1"/>
<path d="M10 0.5 V5 H14.5" fill="#e0e0e0" stroke="#8a8a80" stroke-width="0.8"/>
<g fill="#c9c9c9"><rect x="2.5" y="3" width="5" height="1"/><rect x="2.5" y="5" width="5" height="1"/><rect x="8.5" y="8" width="4" height="1"/><rect x="8.5" y="10" width="4" height="1"/><rect x="8.5" y="12" width="4" height="1"/><rect x="2.5" y="14" width="10" height="1"/></g>
<rect x="2.5" y="7.5" width="5" height="4.5" fill="#5fc553"/>
</svg>
<span id="t116" style="position:absolute;top:208.00px;line-height:20px;font-size:12.5px;color:#111;font-weight:bold;white-space:pre;left:175.5px;transform-origin:0 50%;transform:scaleX(0.9391);">Rapprocher un compte</span>
<svg style="position:absolute;left:860px;top:208px" width="40" height="20" viewBox="0 0 40 20">
<path d="M5 9.7 H15 M10 4.7 V14.7" stroke="#bcc4cc" stroke-width="1.5"/>
<path d="M28 6 L36 14 M36 6 L28 14" stroke="#b4bcc4" stroke-width="1.8"/>
</svg>
<svg style="position:absolute;left:165px;top:235px" width="26" height="26" viewBox="0 0 26 26"><path d="M6.6 4.6 H16.5 L19.4 7.5 V19.4 H6.6 Z" fill="#fff" stroke="#111" stroke-width="1.3"/><path d="M16.3 4.6 V7.7 H19.4" fill="#e8e0d0" stroke="#111" stroke-width="0.9"/><rect x="8" y="6" width="6" height="1.4" fill="#8ab4ea"/><path d="M13 10.5 H17 M14 12.8 H17 M14 15 H17" stroke="#6a7cc0" stroke-width="0.9"/><path d="M7.6 9 H11 V12.3 H14.4 V15.6 H11 V19 H7.6 V15.6 H4.4 V12.3 H7.6 Z" fill="#5cc848"/><path d="M8 10 H10 V13 H13 V14 H8 Z" fill="#8ada70"/></svg>
<svg style="position:absolute;left:195px;top:235px" width="26" height="26" viewBox="0 0 26 26"><path d="M6.6 4.6 H16 L18.6 7.2 V19.5 H6.6 Z" fill="#fff" stroke="#6a6a6a" stroke-width="1.3"/><rect x="7.6" y="6" width="6.5" height="2.6" fill="#6f96e4"/><path d="M7.8 11 H12 M7.8 13.5 H11 M7.8 16 H10" stroke="#aaa" stroke-width="0.9"/><path d="M8.5 18.5 L9.5 15.5 L19 5.5 L20.6 7 L11 17 Z" fill="#5cc848" stroke="#2e8a28" stroke-width="0.5"/><path d="M19 5.5 L20 4.5 L21.6 6 L20.6 7 Z" fill="#e04040"/><path d="M8.5 18.5 L9.5 15.5 L11 17 Z" fill="#4a3a20"/></svg>
<svg style="position:absolute;left:225px;top:235px" width="26" height="26" viewBox="0 0 26 26"><path d="M6.5 4.6 H16.5 L19.6 7.7 V19.4 H6.5 Z" fill="#fff" stroke="#111" stroke-width="1.3"/><path d="M16.3 4.6 V7.9 H19.6" fill="#e8e0d0" stroke="#111" stroke-width="0.9"/><rect x="8" y="6" width="6" height="1.4" fill="#8ab4ea"/><path d="M14 10.5 H18 M15 12.8 H18 M15 15 H18" stroke="#6a7cc0" stroke-width="0.9"/><path d="M8 9.2 Q10 7.8 12 9.2" fill="none" stroke="#2a2f6a" stroke-width="1"/><rect x="5.5" y="9.4" width="9" height="2.2" fill="#d8dcf0" stroke="#2a2f6a" stroke-width="1"/><path d="M6.5 11.6 H13.5 L13 19.2 H7 Z" fill="#c4c8e4" stroke="#2a2f6a" stroke-width="1.1"/><path d="M8.8 13 V18 M11.2 13 V18" stroke="#7a7e98" stroke-width="1"/></svg>
<svg style="position:absolute;left:270px;top:235px" width="26" height="26" viewBox="0 0 26 26"><rect x="7.5" y="4.5" width="10.5" height="6.5" fill="#f4f4f4" stroke="#8a8a8a" stroke-width="0.9"/><path d="M5.5 10.5 H20 Q21 10.5 21 11.5 V16.5 H4.5 V11.5 Q4.5 10.5 5.5 10.5 Z" fill="#e8ecf0" stroke="#8a8a8a" stroke-width="0.9"/><rect x="7" y="11.2" width="11" height="3" fill="#5a9ae8"/><rect x="6" y="15.5" width="13.5" height="1.4" fill="#333"/><rect x="7" y="17" width="11.5" height="2.6" fill="#f0f0f0" stroke="#8a8a8a" stroke-width="0.8"/></svg>
<svg style="position:absolute;left:300px;top:235px" width="26" height="26" viewBox="0 0 26 26"><path d="M6.5 4.5 H13.5 L16 7 V16 H6.5 Z" fill="#fff" stroke="#555" stroke-width="1.2"/><rect x="7.5" y="6" width="4" height="2" fill="#6f96e4"/><path d="M7.8 10 H12 M7.8 12 H11 M7.8 14 H11" stroke="#aaa" stroke-width="0.8"/><path d="M11.5 8.5 H18.5 L21 11 V19.5 H11.5 Z" fill="#fff" stroke="#555" stroke-width="1.2"/><rect x="12.5" y="10" width="4" height="1.6" fill="#8ab4ea"/><path d="M12.8 14 H17 M12.8 16.5 H17" stroke="#aaa" stroke-width="0.8"/></svg>
<svg style="position:absolute;left:332px;top:235px" width="26" height="26" viewBox="0 0 26 26"><path d="M6.5 4.5 H16 L19.5 8 V19.5 H6.5 Z" fill="#fff" stroke="#4a4030" stroke-width="1.2"/><path d="M8 7 H14 M8 9 H13" stroke="#aaa" stroke-width="0.8"/><rect x="7.5" y="11" width="7" height="3.5" fill="#58c848"/><path d="M8 17.5 H16" stroke="#aaa" stroke-width="0.8"/><circle cx="11.5" cy="9.5" r="4.9" fill="#e8f0f8" fill-opacity="0.5" stroke="#5a78c0" stroke-width="1.3"/><path d="M15 13 L21.5 19.3" stroke="#3a5aa8" stroke-width="2" stroke-linecap="round"/></svg>
<svg style="position:absolute;left:376px;top:235px" width="26" height="26" viewBox="0 0 26 26"><rect x="6.6" y="4.7" width="13" height="13" fill="#f4f4f4" stroke="#8a90b0" stroke-width="1.3"/><rect x="7.5" y="6" width="11.2" height="3.2" fill="#68aee0"/><g fill="#555"><rect x="8" y="10.5" width="1.4" height="1.4"/><rect x="10.3" y="10.5" width="1.4" height="1.4"/><rect x="12.6" y="10.5" width="1.4" height="1.4"/><rect x="14.9" y="10.5" width="1.4" height="1.4"/><rect x="8" y="12.7" width="1.4" height="1.4"/><rect x="10.3" y="12.7" width="1.4" height="1.4"/><rect x="12.6" y="12.7" width="1.4" height="1.4"/><rect x="14.9" y="12.7" width="1.4" height="1.4"/><rect x="8" y="14.9" width="1.4" height="1.4"/><rect x="10.3" y="14.9" width="1.4" height="1.4"/><rect x="14.9" y="14.9" width="2.5" height="1.4"/></g><rect x="17" y="10" width="1.5" height="7" fill="#777"/></svg>
<span id="t117" style="position:absolute;top:256.00px;line-height:20px;font-size:11.5px;color:#111;font-weight:normal;white-space:pre;left:203.3px;transform-origin:0 50%;transform:scaleX(0.9358);">Compte à rapprocher</span>
<div style="position:absolute;left:203px;top:273px;width:221.5px;height:21.5px;background:#fff;border:1px solid #d9dde2;box-sizing:border-box;"></div>
<span id="t118" style="position:absolute;top:272.80px;line-height:20px;font-size:11.5px;color:#111;font-weight:normal;white-space:pre;left:208px;transform-origin:0 50%;transform:scaleX(0.8717);">Compte BNP</span>
<svg style="position:absolute;left:409px;top:280px" width="12" height="8"><path d="M1.5 2 L6 5.5 L10.5 2" fill="none" stroke="#9ea3a8" stroke-width="1.4"/></svg>
<span id="t119" style="position:absolute;top:237.00px;line-height:20px;font-size:12.5px;color:#111;font-weight:bold;white-space:pre;left:549.6px;transform-origin:0 50%;transform:scaleX(0.9514);">Informations Relevé bancaire</span>
<span id="t120" style="position:absolute;top:255.60px;line-height:20px;font-size:11.5px;color:#111;font-weight:normal;white-space:pre;left:500px;transform-origin:0 50%;transform:scaleX(0.9220);">Solde initial du relevé</span>
<div style="position:absolute;left:497px;top:273px;width:114.5px;height:21.5px;background:#fff;border:1px solid #d9dde2;box-sizing:border-box;"></div>
<span id="t121" style="position:absolute;top:272.80px;line-height:20px;font-size:11.5px;color:#111;font-weight:normal;white-space:pre;left:208.70000000000005px;width:400px;text-align:right;transform-origin:100% 50%;transform:scaleX(0.9497);">10 093,22</span>
<span id="t122" style="position:absolute;top:255.60px;line-height:20px;font-size:11.5px;color:#111;font-weight:normal;white-space:pre;left:661px;transform-origin:0 50%;transform:scaleX(0.9403);">Solde final du relevé</span>
<div style="position:absolute;left:661px;top:273px;width:115px;height:21.5px;background:#fff;border:1px solid #d9dde2;box-sizing:border-box;"></div>
<span id="t123" style="position:absolute;top:272.80px;line-height:20px;font-size:11.5px;color:#111;font-weight:normal;white-space:pre;left:373px;width:400px;text-align:right;transform-origin:100% 50%;transform:scaleX(0.9382);">2 908,18</span>
<span id="t124" style="position:absolute;top:317.80px;line-height:20px;font-size:11.5px;color:#111;font-weight:normal;white-space:pre;left:255.7px;transform-origin:0 50%;transform:scaleX(0.9402);">Montants inscrits au débit du compte</span>
<span id="t125" style="position:absolute;top:318.00px;line-height:20px;font-size:11.5px;color:#111;font-weight:bold;white-space:pre;left:609.6px;transform-origin:0 50%;transform:scaleX(1.0045);">Montants inscrits au crédit du compte</span>
<div style="position:absolute;left:535.5px;top:336px;width:356.5px;height:2px;background:#f01818;"></div>
<div style="position:absolute;left:164.5px;top:340px;width:359.5px;height:222.5px;background:#fff;border:1px solid #dde1e6;box-sizing:border-box;"></div>
<div style="position:absolute;left:505px;top:341px;width:18px;height:220.5px;background:#f5f7f9;"></div>
<div style="position:absolute;left:167px;top:342px;width:335px;height:19px;background:#edf0f3;"></div>
<div style="position:absolute;left:196.5px;top:342px;width:1px;height:19px;background:#d9dee3;"></div>
<div style="position:absolute;left:267.5px;top:342px;width:1px;height:19px;background:#d9dee3;"></div>
<div style="position:absolute;left:345px;top:342px;width:1px;height:19px;background:#d9dee3;"></div>
<div style="position:absolute;left:410px;top:342px;width:1px;height:19px;background:#d9dee3;"></div>
<div style="position:absolute;left:502px;top:342px;width:1px;height:19px;background:#d9dee3;"></div>
<div style="position:absolute;left:167px;top:342px;width:2px;height:19px;background:#d9dee3;"></div>
<span id="t126" style="position:absolute;top:341.60px;line-height:20px;font-size:11px;color:#111;font-weight:normal;white-space:pre;left:173.7px;transform-origin:0 50%;">Pnt</span>
<span id="t127" style="position:absolute;top:341.60px;line-height:20px;font-size:11px;color:#111;font-weight:normal;white-space:pre;left:203.5px;transform-origin:0 50%;">Valeur</span>
<span id="t128" style="position:absolute;top:341.60px;line-height:20px;font-size:11px;color:#111;font-weight:normal;white-space:pre;left:273.7px;transform-origin:0 50%;">Type</span>
<span id="t129" style="position:absolute;top:341.60px;line-height:20px;font-size:11px;color:#111;font-weight:normal;white-space:pre;left:351.7px;transform-origin:0 50%;">Tiers</span>
<span id="t130" style="position:absolute;top:341.60px;line-height:20px;font-size:11px;color:#111;font-weight:normal;white-space:pre;left:416.8px;transform-origin:0 50%;">Montant</span>
<svg style="position:absolute;left:246px;top:347px" width="14" height="9"><path d="M0.8 8 H13.2 L7 1 Z" fill="#8eb2ec" stroke="#3a64c0" stroke-width="1"/><path d="M3 7.2 H11 L7 3 Z" fill="#b0ccf4" opacity="0.7"/></svg>
<div style="position:absolute;left:166px;top:361px;width:340px;height:200px;overflow:hidden">
<div style="position:absolute;left:1px;top:0px;width:335px;height:18px;background:#d5d9dd;"></div>
<span id="t131" style="position:absolute;top:-1.00px;line-height:20px;font-size:11px;color:#111;font-weight:normal;white-space:pre;font-style:italic;left:35.69999999999999px;transform-origin:0 50%;">07/06/2018</span>
<span id="t132" style="position:absolute;top:-1.00px;line-height:20px;font-size:11px;color:#111;font-weight:normal;white-space:pre;font-style:italic;left:106.60000000000002px;transform-origin:0 50%;">Mastercard</span>
<div style="position:absolute;left:184px;top:0px;width:57px;height:19px;overflow:hidden">
<span id="t133" style="position:absolute;top:-1.00px;line-height:20px;font-size:11px;color:#111;font-weight:normal;white-space:pre;font-style:italic;left:0px;transform-origin:0 50%;">Hyper Marché</span>
</div>
<span id="t134" style="position:absolute;top:-1.00px;line-height:20px;font-size:11px;color:#111;font-weight:normal;white-space:pre;font-style:italic;left:-70.0px;width:400px;text-align:right;transform-origin:100% 50%;">36,13</span>
<div style="position:absolute;left:1px;top:18px;width:335px;height:1px;background:#f0f2f4;"></div>
<span id="t135" style="position:absolute;top:18.00px;line-height:20px;font-size:11px;color:#a6a6a6;font-weight:bold;white-space:pre;left:35.69999999999999px;transform-origin:0 50%;">14/08/2019</span>
<span id="t136" style="position:absolute;top:18.00px;line-height:20px;font-size:11px;color:#a6a6a6;font-weight:bold;white-space:pre;left:106.60000000000002px;transform-origin:0 50%;">PLVT SEPA</span>
<div style="position:absolute;left:184px;top:19px;width:57px;height:19px;overflow:hidden">
<span id="t137" style="position:absolute;top:-1.00px;line-height:20px;font-size:11px;color:#a6a6a6;font-weight:bold;white-space:pre;left:0px;transform-origin:0 50%;">1&amp;1 Internet</span>
</div>
<span id="t138" style="position:absolute;top:18.00px;line-height:20px;font-size:11px;color:#a6a6a6;font-weight:bold;white-space:pre;left:-67.5px;width:400px;text-align:right;transform-origin:100% 50%;">25,99</span>
<svg style="position:absolute;left:11px;top:22px" width="12" height="12" viewBox="0 0 12 12"><path d="M6 0.8 L11.2 6 L6 11.2 L0.8 6 Z" fill="#f8a838" stroke="#4a3e2a" stroke-width="1"/><path d="M6 1.8 L8.6 4.4 L4.4 8.6 L1.8 6 Z" fill="#f8c878" opacity="0.7"/></svg>
<div style="position:absolute;left:1px;top:37px;width:335px;height:1px;background:#f0f2f4;"></div>
<span id="t139" style="position:absolute;top:37.00px;line-height:20px;font-size:11px;color:#a6a6a6;font-weight:bold;white-space:pre;left:35.69999999999999px;transform-origin:0 50%;">24/08/2019</span>
<span id="t140" style="position:absolute;top:37.00px;line-height:20px;font-size:11px;color:#a6a6a6;font-weight:bold;white-space:pre;left:106.60000000000002px;transform-origin:0 50%;">Carte BNP</span>
<div style="position:absolute;left:184px;top:38px;width:57px;height:19px;overflow:hidden">
<span id="t141" style="position:absolute;top:-1.00px;line-height:20px;font-size:11px;color:#a6a6a6;font-weight:bold;white-space:pre;left:0px;transform-origin:0 50%;">Retrait espèces</span>
</div>
<span id="t142" style="position:absolute;top:37.00px;line-height:20px;font-size:11px;color:#a6a6a6;font-weight:bold;white-space:pre;left:-67.5px;width:400px;text-align:right;transform-origin:100% 50%;">40,00</span>
<svg style="position:absolute;left:11px;top:41px" width="12" height="12" viewBox="0 0 12 12"><path d="M6 0.8 L11.2 6 L6 11.2 L0.8 6 Z" fill="#f8a838" stroke="#4a3e2a" stroke-width="1"/><path d="M6 1.8 L8.6 4.4 L4.4 8.6 L1.8 6 Z" fill="#f8c878" opacity="0.7"/></svg>
<div style="position:absolute;left:1px;top:56px;width:335px;height:1px;background:#f0f2f4;"></div>
<span id="t143" style="position:absolute;top:56.00px;line-height:20px;font-size:11px;color:#a6a6a6;font-weight:bold;white-space:pre;left:35.69999999999999px;transform-origin:0 50%;">25/08/2019</span>
<span id="t144" style="position:absolute;top:56.00px;line-height:20px;font-size:11px;color:#a6a6a6;font-weight:bold;white-space:pre;left:106.60000000000002px;transform-origin:0 50%;">Carte BNP</span>
<div style="position:absolute;left:184px;top:57px;width:57px;height:19px;overflow:hidden">
<span id="t145" style="position:absolute;top:-1.00px;line-height:20px;font-size:11px;color:#a6a6a6;font-weight:bold;white-space:pre;left:0px;transform-origin:0 50%;">Restaurant</span>
</div>
<span id="t146" style="position:absolute;top:56.00px;line-height:20px;font-size:11px;color:#a6a6a6;font-weight:bold;white-space:pre;left:-67.5px;width:400px;text-align:right;transform-origin:100% 50%;">49,00</span>
<svg style="position:absolute;left:11px;top:60px" width="12" height="12" viewBox="0 0 12 12"><path d="M6 0.8 L11.2 6 L6 11.2 L0.8 6 Z" fill="#f8a838" stroke="#4a3e2a" stroke-width="1"/><path d="M6 1.8 L8.6 4.4 L4.4 8.6 L1.8 6 Z" fill="#f8c878" opacity="0.7"/></svg>
<div style="position:absolute;left:1px;top:75px;width:335px;height:1px;background:#f0f2f4;"></div>
<span id="t147" style="position:absolute;top:75.00px;line-height:20px;font-size:11px;color:#a6a6a6;font-weight:bold;white-space:pre;left:35.69999999999999px;transform-origin:0 50%;">28/08/2019</span>
<span id="t148" style="position:absolute;top:75.00px;line-height:20px;font-size:11px;color:#a6a6a6;font-weight:bold;white-space:pre;left:106.60000000000002px;transform-origin:0 50%;">PLVT SEPA</span>
<div style="position:absolute;left:184px;top:76px;width:57px;height:19px;overflow:hidden">
<span id="t149" style="position:absolute;top:-1.00px;line-height:20px;font-size:11px;color:#a6a6a6;font-weight:bold;white-space:pre;left:0px;transform-origin:0 50%;">Orange</span>
</div>
<span id="t150" style="position:absolute;top:75.00px;line-height:20px;font-size:11px;color:#a6a6a6;font-weight:bold;white-space:pre;left:-67.5px;width:400px;text-align:right;transform-origin:100% 50%;">9,99</span>
<svg style="position:absolute;left:11px;top:79px" width="12" height="12" viewBox="0 0 12 12"><path d="M6 0.8 L11.2 6 L6 11.2 L0.8 6 Z" fill="#f8a838" stroke="#4a3e2a" stroke-width="1"/><path d="M6 1.8 L8.6 4.4 L4.4 8.6 L1.8 6 Z" fill="#f8c878" opacity="0.7"/></svg>
<div style="position:absolute;left:1px;top:94px;width:335px;height:1px;background:#f0f2f4;"></div>
<span id="t151" style="position:absolute;top:94.00px;line-height:20px;font-size:11px;color:#a6a6a6;font-weight:bold;white-space:pre;left:35.69999999999999px;transform-origin:0 50%;">30/08/2019</span>
<span id="t152" style="position:absolute;top:94.00px;line-height:20px;font-size:11px;color:#a6a6a6;font-weight:bold;white-space:pre;left:106.60000000000002px;transform-origin:0 50%;">Mastercard</span>
<div style="position:absolute;left:184px;top:95px;width:57px;height:19px;overflow:hidden">
<span id="t153" style="position:absolute;top:-1.00px;line-height:20px;font-size:11px;color:#a6a6a6;font-weight:bold;white-space:pre;left:0px;transform-origin:0 50%;">Hyper Marché</span>
</div>
<span id="t154" style="position:absolute;top:94.00px;line-height:20px;font-size:11px;color:#a6a6a6;font-weight:bold;white-space:pre;left:-67.5px;width:400px;text-align:right;transform-origin:100% 50%;">22,55</span>
<svg style="position:absolute;left:11px;top:98px" width="12" height="12" viewBox="0 0 12 12"><path d="M6 0.8 L11.2 6 L6 11.2 L0.8 6 Z" fill="#f8a838" stroke="#4a3e2a" stroke-width="1"/><path d="M6 1.8 L8.6 4.4 L4.4 8.6 L1.8 6 Z" fill="#f8c878" opacity="0.7"/></svg>
<div style="position:absolute;left:1px;top:113px;width:335px;height:1px;background:#f0f2f4;"></div>
<span id="t155" style="position:absolute;top:113.00px;line-height:20px;font-size:11px;color:#111;font-weight:normal;white-space:pre;left:35.69999999999999px;transform-origin:0 50%;">04/09/2019</span>
<span id="t156" style="position:absolute;top:113.00px;line-height:20px;font-size:11px;color:#111;font-weight:normal;white-space:pre;left:106.60000000000002px;transform-origin:0 50%;">Mastercard</span>
<div style="position:absolute;left:184px;top:114px;width:57px;height:19px;overflow:hidden">
<span id="t157" style="position:absolute;top:-1.00px;line-height:20px;font-size:11px;color:#111;font-weight:normal;white-space:pre;left:0px;transform-origin:0 50%;">Hyper Marché</span>
</div>
<span id="t158" style="position:absolute;top:113.00px;line-height:20px;font-size:11px;color:#111;font-weight:normal;white-space:pre;left:-67.5px;width:400px;text-align:right;transform-origin:100% 50%;">149,32</span>
<div style="position:absolute;left:1px;top:132px;width:335px;height:1px;background:#f0f2f4;"></div>
<span id="t159" style="position:absolute;top:132.00px;line-height:20px;font-size:11px;color:#111;font-weight:normal;white-space:pre;left:35.69999999999999px;transform-origin:0 50%;">04/09/2019</span>
<span id="t160" style="position:absolute;top:132.00px;line-height:20px;font-size:11px;color:#111;font-weight:normal;white-space:pre;left:106.60000000000002px;transform-origin:0 50%;">PLVT SEPA</span>
<div style="position:absolute;left:184px;top:133px;width:57px;height:19px;overflow:hidden">
<span id="t161" style="position:absolute;top:-1.00px;line-height:20px;font-size:11px;color:#111;font-weight:normal;white-space:pre;left:0px;transform-origin:0 50%;">Bouygues Telecom</span>
</div>
<span id="t162" style="position:absolute;top:132.00px;line-height:20px;font-size:11px;color:#111;font-weight:normal;white-space:pre;left:-67.5px;width:400px;text-align:right;transform-origin:100% 50%;">24,99</span>
<div style="position:absolute;left:1px;top:151px;width:335px;height:1px;background:#f0f2f4;"></div>
<span id="t163" style="position:absolute;top:151.00px;line-height:20px;font-size:11px;color:#111;font-weight:normal;white-space:pre;left:35.69999999999999px;transform-origin:0 50%;">04/09/2019</span>
<span id="t164" style="position:absolute;top:151.00px;line-height:20px;font-size:11px;color:#111;font-weight:normal;white-space:pre;left:106.60000000000002px;transform-origin:0 50%;">PLVT SEPA</span>
<div style="position:absolute;left:184px;top:152px;width:57px;height:19px;overflow:hidden">
<span id="t165" style="position:absolute;top:-1.00px;line-height:20px;font-size:11px;color:#111;font-weight:normal;white-space:pre;left:0px;transform-origin:0 50%;">Bouygues Telecom</span>
</div>
<span id="t166" style="position:absolute;top:151.00px;line-height:20px;font-size:11px;color:#111;font-weight:normal;white-space:pre;left:-67.5px;width:400px;text-align:right;transform-origin:100% 50%;">24,99</span>
<div style="position:absolute;left:1px;top:170px;width:335px;height:1px;background:#f0f2f4;"></div>
<span id="t167" style="position:absolute;top:170.00px;line-height:20px;font-size:11px;color:#a6a6a6;font-weight:bold;white-space:pre;left:35.69999999999999px;transform-origin:0 50%;">04/09/2019</span>
<span id="t168" style="position:absolute;top:170.00px;line-height:20px;font-size:11px;color:#a6a6a6;font-weight:bold;white-space:pre;left:106.60000000000002px;transform-origin:0 50%;">PLVT SEPA</span>
<div style="position:absolute;left:184px;top:171px;width:57px;height:19px;overflow:hidden">
<span id="t169" style="position:absolute;top:-1.00px;line-height:20px;font-size:11px;color:#a6a6a6;font-weight:bold;white-space:pre;left:0px;transform-origin:0 50%;">IRCEC</span>
</div>
<span id="t170" style="position:absolute;top:170.00px;line-height:20px;font-size:11px;color:#a6a6a6;font-weight:bold;white-space:pre;left:-67.5px;width:400px;text-align:right;transform-origin:100% 50%;">181,72</span>
<svg style="position:absolute;left:11px;top:174px" width="12" height="12" viewBox="0 0 12 12"><path d="M6 0.8 L11.2 6 L6 11.2 L0.8 6 Z" fill="#f8a838" stroke="#4a3e2a" stroke-width="1"/><path d="M6 1.8 L8.6 4.4 L4.4 8.6 L1.8 6 Z" fill="#f8c878" opacity="0.7"/></svg>
<div style="position:absolute;left:1px;top:189px;width:335px;height:1px;background:#f0f2f4;"></div>
<span id="t171" style="position:absolute;top:189.00px;line-height:20px;font-size:11px;color:#111;font-weight:normal;white-space:pre;left:35.69999999999999px;transform-origin:0 50%;">05/09/2019</span>
<span id="t172" style="position:absolute;top:189.00px;line-height:20px;font-size:11px;color:#111;font-weight:normal;white-space:pre;left:106.60000000000002px;transform-origin:0 50%;">PLVT SEPA</span>
<div style="position:absolute;left:184px;top:190px;width:57px;height:19px;overflow:hidden">
<span id="t173" style="position:absolute;top:-1.00px;line-height:20px;font-size:11px;color:#111;font-weight:normal;white-space:pre;left:0px;transform-origin:0 50%;">Bouygues Telecom</span>
</div>
<span id="t174" style="position:absolute;top:189.00px;line-height:20px;font-size:11px;color:#111;font-weight:normal;white-space:pre;left:-67.5px;width:400px;text-align:right;transform-origin:100% 50%;">19,99</span>
<div style="position:absolute;left:1px;top:208px;width:335px;height:1px;background:#f0f2f4;"></div>
<div style="position:absolute;left:30.5px;top:0px;width:1px;height:200px;background:#eceef1;"></div>
<div style="position:absolute;left:101.5px;top:0px;width:1px;height:200px;background:#eceef1;"></div>
<div style="position:absolute;left:179px;top:0px;width:1px;height:200px;background:#eceef1;"></div>
<div style="position:absolute;left:244px;top:0px;width:1px;height:200px;background:#eceef1;"></div>
</div>
<svg style="position:absolute;left:506px;top:345px" width="14" height="10"><path d="M2 7.5 L7 3.5 L12 7.5" fill="none" stroke="#b0b6b8" stroke-width="1.8"/></svg>
<div style="position:absolute;left:509px;top:359px;width:8px;height:17px;background:#c4c6c8;border-radius:4px;"></div>
<svg style="position:absolute;left:506px;top:548px" width="14" height="10"><path d="M2 2.5 L7 6.5 L12 2.5" fill="none" stroke="#b0b6b8" stroke-width="1.8"/></svg>
<span id="t175" style="position:absolute;top:565.50px;line-height:20px;font-size:11.5px;color:#111;font-weight:bold;white-space:pre;left:172.3px;transform-origin:0 50%;transform:scaleX(0.9740);">Total pointé au débit : 6 de 11</span>
<span id="t176" style="position:absolute;top:565.50px;line-height:20px;font-size:11.5px;color:#111;font-weight:bold;white-space:pre;left:115.70000000000005px;width:400px;text-align:right;transform-origin:100% 50%;transform:scaleX(0.94);">329,25</span>
<div style="position:absolute;left:534.5px;top:340px;width:359px;height:148.5px;background:#fff;border:1px solid #dde1e6;box-sizing:border-box;"></div>
<div style="position:absolute;left:537px;top:342px;width:335px;height:18.5px;background:#edf0f3;"></div>
<div style="position:absolute;left:566.7px;top:342px;width:1px;height:18.5px;background:#d9dee3;"></div>
<div style="position:absolute;left:637.6px;top:342px;width:1px;height:18.5px;background:#d9dee3;"></div>
<div style="position:absolute;left:715.8px;top:342px;width:1px;height:18.5px;background:#d9dee3;"></div>
<div style="position:absolute;left:780.8px;top:342px;width:1px;height:18.5px;background:#d9dee3;"></div>
<div style="position:absolute;left:872px;top:342px;width:1px;height:18.5px;background:#d9dee3;"></div>
<div style="position:absolute;left:537px;top:342px;width:2px;height:18.5px;background:#d9dee3;"></div>
<span id="t177" style="position:absolute;top:341.50px;line-height:20px;font-size:11px;color:#111;font-weight:normal;white-space:pre;left:544.2px;transform-origin:0 50%;">Pnt</span>
<span id="t178" style="position:absolute;top:341.50px;line-height:20px;font-size:11px;color:#111;font-weight:normal;white-space:pre;left:573px;transform-origin:0 50%;">Valeur</span>
<span id="t179" style="position:absolute;top:341.50px;line-height:20px;font-size:11px;color:#111;font-weight:normal;white-space:pre;left:643.9px;transform-origin:0 50%;">Type</span>
<span id="t180" style="position:absolute;top:341.50px;line-height:20px;font-size:11px;color:#111;font-weight:normal;white-space:pre;left:721.7px;transform-origin:0 50%;">Tiers</span>
<span id="t181" style="position:absolute;top:341.50px;line-height:20px;font-size:11px;color:#111;font-weight:normal;white-space:pre;left:787px;transform-origin:0 50%;">Montant</span>
<svg style="position:absolute;left:616px;top:347px" width="14" height="9"><path d="M0.8 8 H13.2 L7 1 Z" fill="#8eb2ec" stroke="#3a64c0" stroke-width="1"/><path d="M3 7.2 H11 L7 3 Z" fill="#b0ccf4" opacity="0.7"/></svg>
<div style="position:absolute;left:537px;top:361px;width:335px;height:18px;background:#d5d9dd;outline:1px dotted #8a8f94;outline-offset:-1px;"></div>
<div style="position:absolute;left:566.7px;top:362px;width:1px;height:16px;background:#e6e9ec;"></div>
<div style="position:absolute;left:637.6px;top:362px;width:1px;height:16px;background:#e6e9ec;"></div>
<div style="position:absolute;left:715.8px;top:362px;width:1px;height:16px;background:#e6e9ec;"></div>
<div style="position:absolute;left:780.8px;top:362px;width:1px;height:16px;background:#e6e9ec;"></div>
<span id="t182" style="position:absolute;top:360.00px;line-height:20px;font-size:11px;color:#000;font-weight:normal;white-space:pre;font-style:italic;left:571.9px;transform-origin:0 50%;">05/09/2019</span>
<span id="t183" style="position:absolute;top:360.00px;line-height:20px;font-size:11px;color:#000;font-weight:normal;white-space:pre;font-style:italic;left:642.4px;transform-origin:0 50%;">VIRMTREC</span>
<span id="t184" style="position:absolute;top:360.00px;line-height:20px;font-size:11px;color:#000;font-weight:normal;white-space:pre;font-style:italic;left:720px;transform-origin:0 50%;">AFIDO</span>
<span id="t185" style="position:absolute;top:360.00px;line-height:20px;font-size:11px;color:#000;font-weight:normal;white-space:pre;font-style:italic;left:465.29999999999995px;width:400px;text-align:right;transform-origin:100% 50%;">1 376,94</span>
<span id="t186" style="position:absolute;top:492.20px;line-height:20px;font-size:11.5px;color:#111;font-weight:bold;white-space:pre;left:542.7px;transform-origin:0 50%;transform:scaleX(0.9724);">Total pointé au crédit : 0 de 1</span>
<span id="t187" style="position:absolute;top:492.20px;line-height:20px;font-size:11.5px;color:#111;font-weight:bold;white-space:pre;left:485.6px;width:400px;text-align:right;transform-origin:100% 50%;transform:scaleX(0.94);">0,00</span>
<span id="t188" style="position:absolute;top:517.70px;line-height:20px;font-size:11.5px;color:#111;font-weight:normal;white-space:pre;left:385.6px;width:400px;text-align:right;transform-origin:100% 50%;transform:scaleX(0.9336);">Solde Final inscrit sur le relevé</span>
<span id="t189" style="position:absolute;top:517.70px;line-height:20px;font-size:11.5px;color:#111;font-weight:normal;white-space:pre;left:489.70000000000005px;width:400px;text-align:right;transform-origin:100% 50%;transform:scaleX(0.94);">2 908,18</span>
<span id="t190" style="position:absolute;top:534.00px;line-height:20px;font-size:11.5px;color:#111;font-weight:normal;white-space:pre;left:385.6px;width:400px;text-align:right;transform-origin:100% 50%;transform:scaleX(0.94);">Solde pointé</span>
<span id="t191" style="position:absolute;top:534.00px;line-height:20px;font-size:11.5px;color:#111;font-weight:normal;white-space:pre;left:489.70000000000005px;width:400px;text-align:right;transform-origin:100% 50%;transform:scaleX(0.94);">-329,25</span>
<span id="t192" style="position:absolute;top:550.20px;line-height:20px;font-size:11.5px;color:#111;font-weight:normal;white-space:pre;left:385.6px;width:400px;text-align:right;transform-origin:100% 50%;transform:scaleX(0.94);">Solde final rapproché</span>
<span id="t193" style="position:absolute;top:550.20px;line-height:20px;font-size:11.5px;color:#111;font-weight:normal;white-space:pre;left:489.70000000000005px;width:400px;text-align:right;transform-origin:100% 50%;transform:scaleX(0.94);">9 763,97</span>
<span id="t194" style="position:absolute;top:566.80px;line-height:20px;font-size:11.5px;color:#111;font-weight:bold;white-space:pre;left:385.6px;width:400px;text-align:right;transform-origin:100% 50%;transform:scaleX(0.9995);">Différence Rapprochement - Relevé</span>
<span id="t195" style="position:absolute;top:566.80px;line-height:20px;font-size:11.5px;color:#111;font-weight:bold;white-space:pre;left:489.70000000000005px;width:400px;text-align:right;transform-origin:100% 50%;transform:scaleX(0.94);">6 855,79</span>
<svg style="position:absolute;left:161px;top:601px" width="19" height="19" viewBox="0 0 19 19">
<defs><radialGradient id="ib" cx="0.4" cy="0.3" r="0.8"><stop offset="0" stop-color="#ffffff"/><stop offset="1" stop-color="#b8d0ec"/></radialGradient></defs>
<path d="M9 1.2 C13.4 1.2 16.8 4.2 16.8 8 C16.8 11.2 14.5 13.6 11.6 14.4 L9.8 17.6 L8.6 14.6 C4.6 14.2 1.2 11.6 1.2 8 C1.2 4.2 4.6 1.2 9 1.2 Z" fill="url(#ib)" stroke="#8aa4c8" stroke-width="0.9"/>
<rect x="7.8" y="6.6" width="2.4" height="5.6" fill="#1a2a80"/><rect x="7" y="11.4" width="4" height="1.1" fill="#1a2a80"/><rect x="7" y="6.6" width="1.5" height="1" fill="#1a2a80"/>
<circle cx="9" cy="4.6" r="1.2" fill="#1a2a80"/>
</svg>
<span id="t196" style="position:absolute;top:593.50px;line-height:20px;font-size:11.5px;color:#111;font-weight:normal;white-space:pre;left:183px;transform-origin:0 50%;transform:scaleX(0.9305);">Pour pointer une ligne, cliquez sur la ligne dans la colonne Pnt ou la colonne Montant ou</span>
<span id="t197" style="position:absolute;top:608.20px;line-height:20px;font-size:11.5px;color:#111;font-weight:normal;white-space:pre;left:183px;transform-origin:0 50%;transform:scaleX(0.9485);">sélectionnez la ligne et enfoncez la barre d’espace.</span>
<div style="position:absolute;left:625px;top:597px;width:75px;height:25px;background:#06b3a9;border-radius:2px;"></div>
<span id="t198" style="position:absolute;top:598.70px;line-height:20px;font-size:11.5px;color:#fff;font-weight:normal;white-space:pre;left:643.2px;transform-origin:0 50%;transform:scaleX(0.9637);">Annuler</span>
<div style="position:absolute;left:706px;top:597px;width:90px;height:25px;background:#06b3a9;border-radius:2px;"></div>
<span id="t199" style="position:absolute;top:599.60px;line-height:20px;font-size:11.5px;color:#fff;font-weight:normal;white-space:pre;left:735.7px;transform-origin:0 50%;transform:scaleX(0.9438);">Suspendre</span>
<div style="position:absolute;left:800px;top:597px;width:89.5px;height:25px;background:#06b3a9;border-radius:2px;"></div>
<span id="t200" style="position:absolute;top:598.70px;line-height:20px;font-size:11.5px;color:#fff;font-weight:normal;white-space:pre;left:815.8px;transform-origin:0 50%;transform:scaleX(0.9568);">Rapprocher</span>
<svg style="position:absolute;left:715px;top:602px" width="16" height="16" viewBox="0 0 16 16">
<rect x="0.7" y="0.7" width="7" height="14.6" rx="1" fill="#f4a434" stroke="#111" stroke-width="1.3"/>
<rect x="8.3" y="0.7" width="7" height="14.6" rx="1" fill="#f4a434" stroke="#111" stroke-width="1.3"/>
<path d="M1.5 11 L7 6 M9 11 L14.5 6" stroke="#d88a2a" stroke-width="0.8"/>
</svg>
</body></html>
